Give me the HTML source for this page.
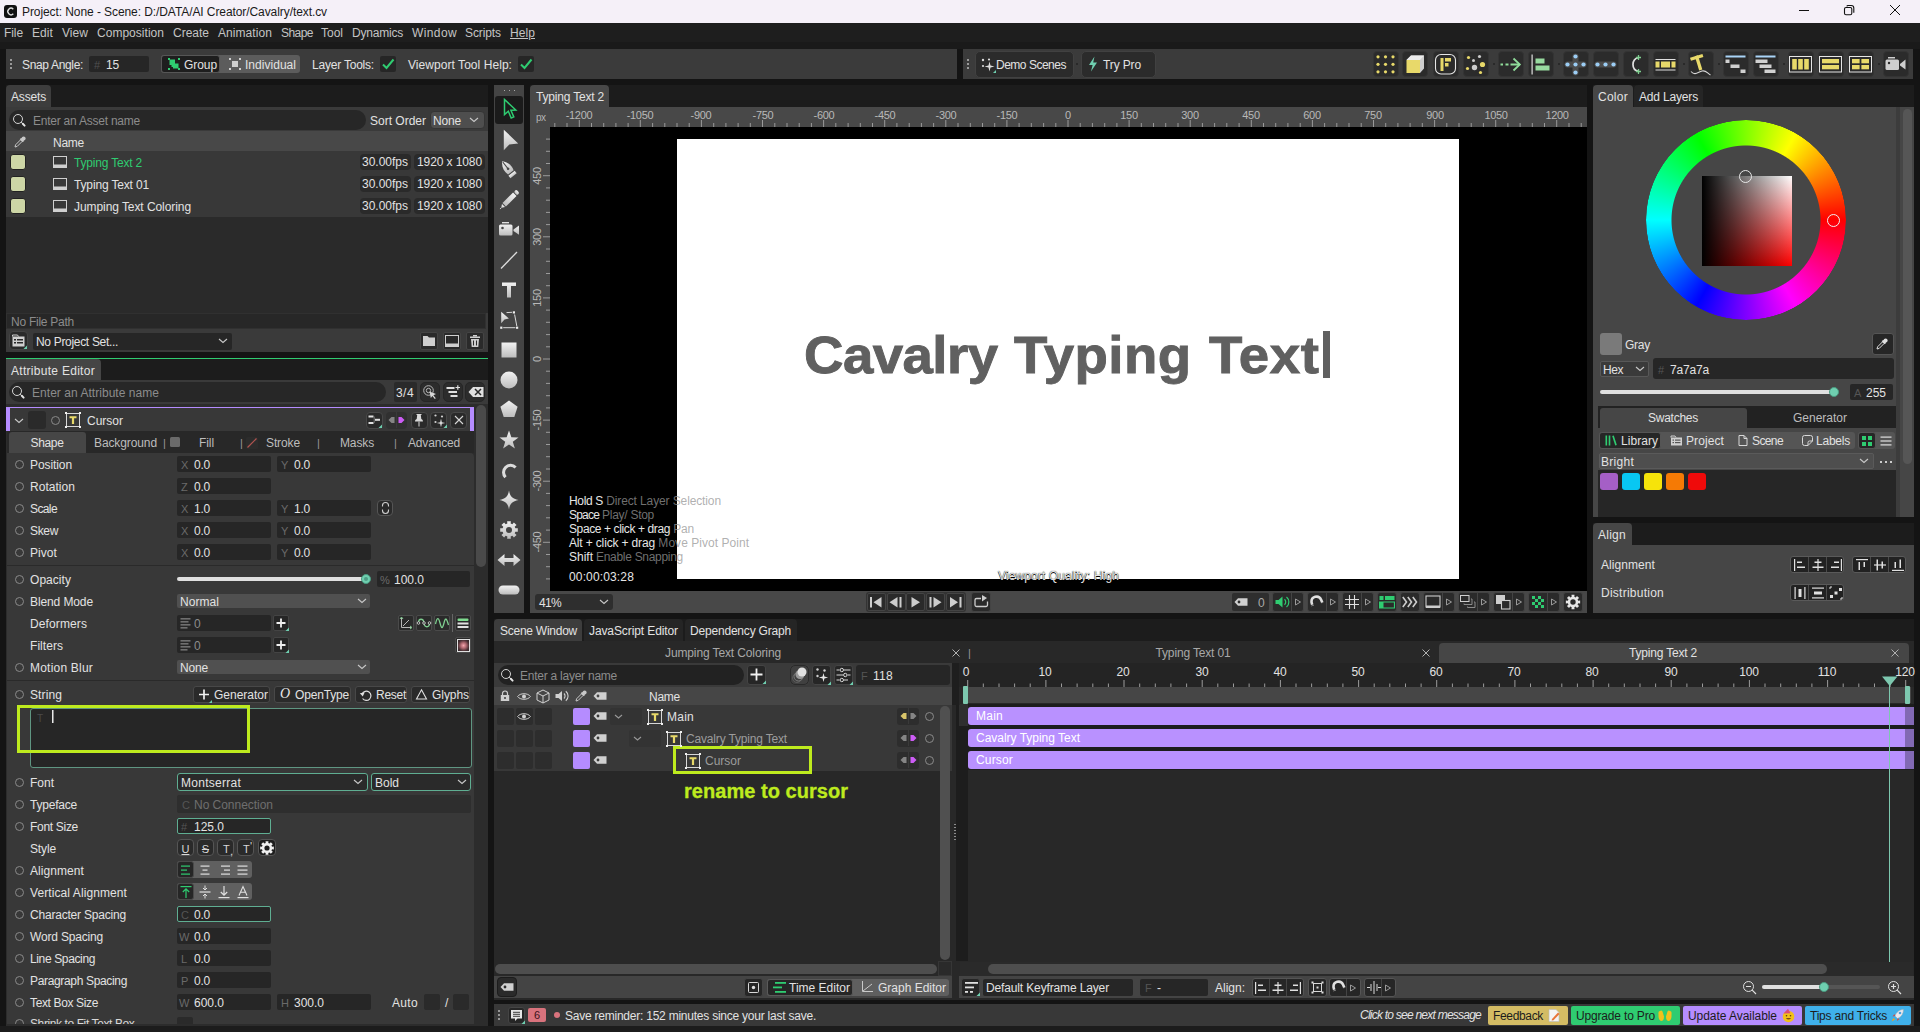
<!DOCTYPE html><html><head><meta charset="utf-8"><title>Cavalry</title><style>

html,body{margin:0;padding:0;}
body{width:1920px;height:1032px;overflow:hidden;background:#141414;position:relative;font-family:"Liberation Sans",sans-serif;}
div,span,svg{position:absolute;display:block;}
span{white-space:pre;}

</style></head><body>
<div style="left:0px;top:0px;width:1920px;height:23px;background:#f5f0f8;"></div>
<div style="left:4px;top:5px;width:13px;height:13px;background:#111;border-radius:3px;"></div>
<svg style="left:4px;top:5px" width="13" height="13" viewBox="0 0 13 13"><path d="M9.3 4.2 A3.2 3.2 0 1 0 9.3 8.8" fill="none" stroke="#ddd" stroke-width="1.4"/></svg>
<span style="top:2.5px;font-size:12px;line-height:18px;color:#1a1a1a;letter-spacing:-0.082px;left:22px;">Project: None - Scene: D:/DATA/AI Creator/Cavalry/text.cv</span>
<svg style="left:1794px;top:2px" width="120" height="18" viewBox="0 0 120 18"><path d="M5 8.5h10" stroke="#111" stroke-width="1" fill="none"/><rect x="50.500" y="5.500" width="7.300" height="7.200" rx="1.500" fill="none" stroke="#111" stroke-width="1.100"/><path d="M52.800 4.300Q53 3.500 54 3.500h3.300a2.500 2.500 0 0 1 2.500 2.500v4.700" fill="none" stroke="#111" stroke-width="1.100"/><path d="M96 3l10 10M106 3l-10 10" stroke="#111" stroke-width="1" fill="none"/></svg>
<div style="left:0px;top:23px;width:1920px;height:19px;background:#1e1e1e;"></div>
<div style="left:0px;top:42px;width:1920px;height:7px;background:#1a1a1a;"></div>
<span style="top:24.2px;font-size:12px;line-height:18px;color:#c4c4c4;letter-spacing:-0.086px;left:4px;">File</span>
<span style="top:24.2px;font-size:12px;line-height:18px;color:#c4c4c4;letter-spacing:0.078px;left:32px;">Edit</span>
<span style="top:24.2px;font-size:12px;line-height:18px;color:#c4c4c4;letter-spacing:0.051px;left:62px;">View</span>
<span style="top:24.2px;font-size:12px;line-height:18px;color:#c4c4c4;letter-spacing:0.027px;left:97px;">Composition</span>
<span style="top:24.2px;font-size:12px;line-height:18px;color:#c4c4c4;letter-spacing:-0.005px;left:173px;">Create</span>
<span style="top:24.2px;font-size:12px;line-height:18px;color:#c4c4c4;letter-spacing:0.069px;left:218px;">Animation</span>
<span style="top:24.2px;font-size:12px;line-height:18px;color:#c4c4c4;letter-spacing:-0.541px;left:281px;">Shape</span>
<span style="top:24.2px;font-size:12px;line-height:18px;color:#c4c4c4;left:321px;">Tool</span>
<span style="top:24.2px;font-size:12px;line-height:18px;color:#c4c4c4;letter-spacing:-0.211px;left:352px;">Dynamics</span>
<span style="top:24.2px;font-size:12px;line-height:18px;color:#c4c4c4;letter-spacing:0.385px;left:412px;">Window</span>
<span style="top:24.2px;font-size:12px;line-height:18px;color:#c4c4c4;letter-spacing:-0.098px;left:465px;">Scripts</span>
<span style="top:24.2px;font-size:12px;line-height:18px;color:#c4c4c4;letter-spacing:0.078px;left:510px;text-decoration:underline;">Help</span>
<div style="left:6px;top:49px;width:951px;height:30px;background:#3b3b3b;"></div>
<div style="left:10px;top:59px;width:2px;height:2px;background:#9a9a9a;"></div>
<div style="left:10px;top:63px;width:2px;height:2px;background:#9a9a9a;"></div>
<div style="left:10px;top:67px;width:2px;height:2px;background:#9a9a9a;"></div>
<span style="top:56.0px;font-size:12px;line-height:18px;color:#e2e2e2;letter-spacing:-0.339px;left:22px;">Snap Angle:</span>
<div style="left:89px;top:56px;width:60px;height:16px;background:#262626;border-radius:2px;"></div>
<span style="top:57.0px;font-size:11px;line-height:16px;color:#505050;left:94px;">#</span>
<span style="top:56.0px;font-size:12px;line-height:18px;color:#e2e2e2;letter-spacing:-0.180px;left:106px;">15</span>
<div style="left:161px;top:55px;width:139px;height:18px;background:#5c5c5c;border-radius:3px;"></div>
<div style="left:161px;top:55px;width:59px;height:18px;background:#1e1e1e;border-radius:3px;border:1px solid #565656;box-sizing:border-box;"></div>
<span style="top:56.0px;font-size:12px;line-height:18px;color:#e2e2e2;letter-spacing:-0.072px;left:184px;">Group</span>
<span style="top:56.0px;font-size:12px;line-height:18px;color:#e2e2e2;letter-spacing:0.030px;left:245px;">Individual</span>
<span style="top:56.0px;font-size:12px;line-height:18px;color:#e2e2e2;letter-spacing:-0.207px;left:312px;">Layer Tools:</span>
<div style="left:380px;top:56px;width:16px;height:16px;background:#262626;border-radius:2px;"></div>
<span style="top:56.0px;font-size:12px;line-height:18px;color:#e2e2e2;letter-spacing:0.055px;left:408px;">Viewport Tool Help:</span>
<div style="left:518px;top:56px;width:16px;height:16px;background:#262626;border-radius:2px;"></div>
<div style="left:963px;top:49px;width:950px;height:30px;background:#3b3b3b;"></div>
<div style="left:967px;top:59px;width:2px;height:2px;background:#9a9a9a;"></div>
<div style="left:967px;top:63px;width:2px;height:2px;background:#9a9a9a;"></div>
<div style="left:967px;top:67px;width:2px;height:2px;background:#9a9a9a;"></div>
<div style="left:974.5px;top:50.6px;width:99px;height:27px;background:#2b2b2b;border-radius:5px;border:1px solid #414141;box-sizing:border-box;"></div>
<span style="top:56.0px;font-size:12px;line-height:18px;color:#e2e2e2;letter-spacing:-0.489px;left:996px;">Demo Scenes</span>
<div style="left:1081px;top:50.6px;width:74.5px;height:27px;background:#2b2b2b;border-radius:5px;border:1px solid #414141;box-sizing:border-box;"></div>
<span style="top:56.0px;font-size:12px;line-height:18px;color:#e2e2e2;letter-spacing:-0.127px;left:1103px;">Try Pro</span>
<div style="left:1372.6px;top:50.7px;width:26.8px;height:26.8px;background:#2b2b2b;border-radius:4px;border:1px solid #343434;box-sizing:border-box;"></div>
<div style="left:1401.6px;top:50.7px;width:26.8px;height:26.8px;background:#2b2b2b;border-radius:4px;border:1px solid #343434;box-sizing:border-box;"></div>
<div style="left:1432.6px;top:50.7px;width:26.8px;height:26.8px;background:#2b2b2b;border-radius:4px;border:1px solid #343434;box-sizing:border-box;"></div>
<div style="left:1462.6px;top:50.7px;width:26.8px;height:26.8px;background:#2b2b2b;border-radius:4px;border:1px solid #343434;box-sizing:border-box;"></div>
<div style="left:1497.6px;top:50.7px;width:26.8px;height:26.8px;background:#2b2b2b;border-radius:4px;border:1px solid #343434;box-sizing:border-box;"></div>
<div style="left:1527.6px;top:50.7px;width:26.8px;height:26.8px;background:#2b2b2b;border-radius:4px;border:1px solid #343434;box-sizing:border-box;"></div>
<div style="left:1562.6px;top:50.7px;width:26.8px;height:26.8px;background:#2b2b2b;border-radius:4px;border:1px solid #343434;box-sizing:border-box;"></div>
<div style="left:1592.6px;top:50.7px;width:26.8px;height:26.8px;background:#2b2b2b;border-radius:4px;border:1px solid #343434;box-sizing:border-box;"></div>
<div style="left:1622.6px;top:50.7px;width:26.8px;height:26.8px;background:#2b2b2b;border-radius:4px;border:1px solid #343434;box-sizing:border-box;"></div>
<div style="left:1652.6px;top:50.7px;width:26.8px;height:26.8px;background:#2b2b2b;border-radius:4px;border:1px solid #343434;box-sizing:border-box;"></div>
<div style="left:1687.6px;top:50.7px;width:26.8px;height:26.8px;background:#2b2b2b;border-radius:4px;border:1px solid #343434;box-sizing:border-box;"></div>
<div style="left:1722.6px;top:50.7px;width:26.8px;height:26.8px;background:#2b2b2b;border-radius:4px;border:1px solid #343434;box-sizing:border-box;"></div>
<div style="left:1752.6px;top:50.7px;width:26.8px;height:26.8px;background:#2b2b2b;border-radius:4px;border:1px solid #343434;box-sizing:border-box;"></div>
<div style="left:1787.6px;top:50.7px;width:26.8px;height:26.8px;background:#2b2b2b;border-radius:4px;border:1px solid #343434;box-sizing:border-box;"></div>
<div style="left:1817.6px;top:50.7px;width:26.8px;height:26.8px;background:#2b2b2b;border-radius:4px;border:1px solid #343434;box-sizing:border-box;"></div>
<div style="left:1847.6px;top:50.7px;width:26.8px;height:26.8px;background:#2b2b2b;border-radius:4px;border:1px solid #343434;box-sizing:border-box;"></div>
<div style="left:1882.6px;top:50.7px;width:26.8px;height:26.8px;background:#2b2b2b;border-radius:4px;border:1px solid #343434;box-sizing:border-box;"></div>
<div style="left:6px;top:85px;width:482px;height:22px;background:#1c1c1c;"></div>
<div style="left:6px;top:85px;width:45px;height:22px;background:#3d3d3d;border-radius:4px 4px 0 0;"></div>
<span style="top:88.0px;font-size:12px;line-height:18px;color:#e2e2e2;letter-spacing:-0.169px;left:11px;">Assets</span>
<div style="left:6px;top:107px;width:482px;height:245px;background:#3a3a3a;"></div>
<div style="left:6px;top:151px;width:482px;height:162px;background:#2a2a2a;"></div>
<div style="left:9px;top:110px;width:357px;height:20px;background:#272727;border-radius:10px;"></div>
<span style="top:112.0px;font-size:12px;line-height:18px;color:#8c8c8c;letter-spacing:-0.232px;left:33px;">Enter an Asset name</span>
<span style="top:112.0px;font-size:12px;line-height:18px;color:#e2e2e2;left:370px;">Sort Order</span>
<div style="left:430px;top:111px;width:55px;height:18px;background:#4e4e4e;border-radius:4px;border:1px solid #343434;box-sizing:border-box;"></div>
<span style="top:112.0px;font-size:12px;line-height:18px;color:#e2e2e2;letter-spacing:-0.172px;left:433px;">None</span>
<div style="left:6px;top:131px;width:482px;height:20px;background:#484848;"></div>
<span style="top:134.0px;font-size:12px;line-height:18px;color:#e2e2e2;letter-spacing:-0.254px;left:53px;">Name</span>
<div style="left:6px;top:151px;width:482px;height:22px;background:#383838;"></div>
<div style="left:10px;top:154px;width:16px;height:16px;background:#cdd6a6;border-radius:3px;border:1px solid #222;box-sizing:border-box;"></div>
<span style="top:154.0px;font-size:12px;line-height:18px;color:#2fcc71;letter-spacing:-0.192px;left:74px;">Typing Text 2</span>
<div style="left:360px;top:154px;width:51px;height:16px;background:#2a2a2a;border-radius:4px;"></div>
<span style="top:153.0px;font-size:12px;line-height:18px;color:#e2e2e2;letter-spacing:-0.006px;left:362px;">30.00fps</span>
<div style="left:414px;top:154px;width:71px;height:16px;background:#2a2a2a;border-radius:4px;"></div>
<span style="top:153.0px;font-size:12px;line-height:18px;color:#e2e2e2;letter-spacing:-0.097px;left:417px;">1920 x 1080</span>
<div style="left:6px;top:173px;width:482px;height:22px;background:#383838;"></div>
<div style="left:10px;top:176px;width:16px;height:16px;background:#cdd6a6;border-radius:3px;border:1px solid #222;box-sizing:border-box;"></div>
<span style="top:176.0px;font-size:12px;line-height:18px;color:#e2e2e2;letter-spacing:-0.155px;left:74px;">Typing Text 01</span>
<div style="left:360px;top:176px;width:51px;height:16px;background:#2a2a2a;border-radius:4px;"></div>
<span style="top:175.0px;font-size:12px;line-height:18px;color:#e2e2e2;letter-spacing:-0.006px;left:362px;">30.00fps</span>
<div style="left:414px;top:176px;width:71px;height:16px;background:#2a2a2a;border-radius:4px;"></div>
<span style="top:175.0px;font-size:12px;line-height:18px;color:#e2e2e2;letter-spacing:-0.097px;left:417px;">1920 x 1080</span>
<div style="left:6px;top:195px;width:482px;height:22px;background:#383838;"></div>
<div style="left:10px;top:198px;width:16px;height:16px;background:#cdd6a6;border-radius:3px;border:1px solid #222;box-sizing:border-box;"></div>
<span style="top:198.0px;font-size:12px;line-height:18px;color:#e2e2e2;letter-spacing:-0.072px;left:74px;">Jumping Text Coloring</span>
<div style="left:360px;top:198px;width:51px;height:16px;background:#2a2a2a;border-radius:4px;"></div>
<span style="top:197.0px;font-size:12px;line-height:18px;color:#e2e2e2;letter-spacing:-0.006px;left:362px;">30.00fps</span>
<div style="left:414px;top:198px;width:71px;height:16px;background:#2a2a2a;border-radius:4px;"></div>
<span style="top:197.0px;font-size:12px;line-height:18px;color:#e2e2e2;letter-spacing:-0.097px;left:417px;">1920 x 1080</span>
<div style="left:6px;top:313px;width:480px;height:16px;background:#272727;border:1px solid #303030;box-sizing:border-box;"></div>
<span style="top:312.5px;font-size:12px;line-height:18px;color:#8c8c8c;letter-spacing:-0.253px;left:11px;">No File Path</span>
<div style="left:9px;top:331px;width:19px;height:19px;background:#2a2a2a;border-radius:4px;border:1px solid #444;box-sizing:border-box;"></div>
<div style="left:33px;top:333px;width:199px;height:17px;background:#262626;border-radius:2px;"></div>
<span style="top:332.8px;font-size:12px;line-height:18px;color:#e2e2e2;letter-spacing:-0.316px;left:36px;">No Project Set...</span>
<div style="left:420px;top:332px;width:18px;height:18px;background:#2a2a2a;border-radius:2px;border:1px solid #444;box-sizing:border-box;"></div>
<div style="left:443px;top:332px;width:18px;height:18px;background:#2a2a2a;border-radius:2px;border:1px solid #444;box-sizing:border-box;"></div>
<div style="left:466px;top:332px;width:18px;height:18px;background:#2a2a2a;border-radius:2px;border:1px solid #444;box-sizing:border-box;"></div>
<div style="left:6px;top:358px;width:482px;height:1px;background:#2fcc71;"></div>
<div style="left:6px;top:359px;width:482px;height:21px;background:#1c1c1c;"></div>
<div style="left:6px;top:359px;width:95px;height:21px;background:#454545;border-radius:0 4px 0 0;"></div>
<span style="top:361.5px;font-size:12px;line-height:18px;color:#e2e2e2;letter-spacing:0.289px;left:11px;">Attribute Editor</span>
<div style="left:0px;top:1026px;width:1920px;height:6px;background:#1c1c1c;"></div>
<div style="left:6px;top:380px;width:482px;height:646px;background:#3a3a3a;"></div>
<div style="left:9px;top:382px;width:377px;height:20px;background:#272727;border-radius:10px;"></div>
<span style="top:384.0px;font-size:12px;line-height:18px;color:#8c8c8c;letter-spacing:0.040px;left:32px;">Enter an Attribute name</span>
<div style="left:394px;top:382px;width:23px;height:20px;background:#2a2a2a;border-radius:2px;"></div>
<span style="top:384.0px;font-size:12px;line-height:18px;color:#e2e2e2;letter-spacing:0.438px;left:396px;">3/4</span>
<div style="left:420px;top:382px;width:20px;height:20px;background:#2c2c2c;border-radius:5px;border:1px solid #262626;box-sizing:border-box;"></div>
<div style="left:443px;top:382px;width:20px;height:20px;background:#2c2c2c;border-radius:5px;border:1px solid #262626;box-sizing:border-box;"></div>
<div style="left:465px;top:382px;width:20px;height:20px;background:#2c2c2c;border-radius:5px;border:1px solid #262626;box-sizing:border-box;"></div>
<div style="left:6px;top:404px;width:482px;height:622px;background:#2c2c2c;"></div>
<div style="left:7px;top:408px;width:467px;height:23px;background:#383838;"></div>
<div style="left:7px;top:407px;width:467px;height:1px;background:#b58cff;"></div>
<div style="left:6px;top:407px;width:4px;height:24px;background:#b58cff;"></div>
<div style="left:470px;top:407px;width:4px;height:24px;background:#b58cff;"></div>
<div style="left:28px;top:411px;width:18px;height:18px;background:#2a2a2a;border-radius:3px;"></div>
<span style="top:412.0px;font-size:12px;line-height:18px;color:#e2e2e2;left:87px;">Cursor</span>
<div style="left:366px;top:412px;width:17px;height:17px;background:#2a2a2a;border-radius:4px;border:1px solid #484848;box-sizing:border-box;"></div>
<div style="left:411px;top:412px;width:17px;height:17px;background:#2a2a2a;border-radius:4px;border:1px solid #484848;box-sizing:border-box;"></div>
<div style="left:430px;top:412px;width:17px;height:17px;background:#2a2a2a;border-radius:4px;border:1px solid #484848;box-sizing:border-box;"></div>
<div style="left:450px;top:412px;width:17px;height:17px;background:#2a2a2a;border-radius:4px;border:1px solid #484848;box-sizing:border-box;"></div>
<div style="left:386px;top:412px;width:21px;height:17px;background:#303030;border-radius:4px;"></div>
<div style="left:7px;top:431px;width:467px;height:22px;background:#282828;"></div>
<div style="left:9px;top:432px;width:77px;height:21px;background:#464646;border-radius:3px 3px 0 0;"></div>
<span style="top:433.5px;font-size:12px;line-height:18px;color:#e2e2e2;letter-spacing:-0.341px;left:30.5px;">Shape</span>
<span style="top:433.5px;font-size:12px;line-height:18px;color:#bdbdbd;letter-spacing:-0.105px;left:94px;">Background</span>
<span style="top:435.0px;font-size:11px;line-height:16px;color:#999;left:163px;">|</span>
<div style="left:170px;top:437px;width:10px;height:10px;background:#6a6a6a;border-radius:1.5px;"></div>
<span style="top:433.5px;font-size:12px;line-height:18px;color:#bdbdbd;letter-spacing:-0.082px;left:199px;">Fill</span>
<span style="top:435.0px;font-size:11px;line-height:16px;color:#999;left:240px;">|</span>
<span style="top:433.5px;font-size:12px;line-height:18px;color:#bdbdbd;letter-spacing:-0.115px;left:266px;">Stroke</span>
<span style="top:435.0px;font-size:11px;line-height:16px;color:#999;left:317px;">|</span>
<span style="top:433.5px;font-size:12px;line-height:18px;color:#bdbdbd;letter-spacing:-0.134px;left:340px;">Masks</span>
<span style="top:435.0px;font-size:11px;line-height:16px;color:#999;left:394px;">|</span>
<span style="top:433.5px;font-size:12px;line-height:18px;color:#bdbdbd;letter-spacing:-0.172px;left:408px;">Advanced</span>
<div style="left:7px;top:453px;width:467px;height:571px;background:#383838;border-radius:0 4px 0 0;"></div>
<div style="left:476px;top:405px;width:10px;height:162px;background:#4a4a4a;border-radius:5px;"></div>
<div style="left:15px;top:460px;width:9px;height:9px;border-radius:5px;border:1px solid #8a8a8a;box-sizing:border-box;"></div>
<span style="top:456.0px;font-size:12px;line-height:18px;color:#e2e2e2;letter-spacing:-0.088px;left:30px;">Position</span>
<div style="left:177px;top:456px;width:94px;height:16px;background:#262626;border-radius:2px;"></div>
<span style="top:457.0px;font-size:11px;line-height:16px;color:#6a6a6a;left:181px;">X</span>
<span style="top:456.0px;font-size:12px;line-height:18px;color:#e2e2e2;letter-spacing:-0.229px;left:194px;">0.0</span>
<div style="left:277px;top:456px;width:94px;height:16px;background:#262626;border-radius:2px;"></div>
<span style="top:457.0px;font-size:11px;line-height:16px;color:#6a6a6a;left:281px;">Y</span>
<span style="top:456.0px;font-size:12px;line-height:18px;color:#e2e2e2;letter-spacing:-0.229px;left:294px;">0.0</span>
<div style="left:15px;top:482px;width:9px;height:9px;border-radius:5px;border:1px solid #8a8a8a;box-sizing:border-box;"></div>
<span style="top:478.0px;font-size:12px;line-height:18px;color:#e2e2e2;letter-spacing:0.037px;left:30px;">Rotation</span>
<div style="left:177px;top:478px;width:94px;height:16px;background:#262626;border-radius:2px;"></div>
<span style="top:479.0px;font-size:11px;line-height:16px;color:#6a6a6a;left:181px;">Z</span>
<span style="top:478.0px;font-size:12px;line-height:18px;color:#e2e2e2;letter-spacing:-0.229px;left:194px;">0.0</span>
<div style="left:15px;top:504px;width:9px;height:9px;border-radius:5px;border:1px solid #8a8a8a;box-sizing:border-box;"></div>
<span style="top:500.0px;font-size:12px;line-height:18px;color:#e2e2e2;letter-spacing:-0.606px;left:30px;">Scale</span>
<div style="left:177px;top:500px;width:94px;height:16px;background:#262626;border-radius:2px;"></div>
<span style="top:501.0px;font-size:11px;line-height:16px;color:#6a6a6a;left:181px;">X</span>
<span style="top:500.0px;font-size:12px;line-height:18px;color:#e2e2e2;letter-spacing:-0.229px;left:194px;">1.0</span>
<div style="left:277px;top:500px;width:94px;height:16px;background:#262626;border-radius:2px;"></div>
<span style="top:501.0px;font-size:11px;line-height:16px;color:#6a6a6a;left:281px;">Y</span>
<span style="top:500.0px;font-size:12px;line-height:18px;color:#e2e2e2;letter-spacing:-0.229px;left:294px;">1.0</span>
<div style="left:15px;top:526px;width:9px;height:9px;border-radius:5px;border:1px solid #8a8a8a;box-sizing:border-box;"></div>
<span style="top:522.0px;font-size:12px;line-height:18px;color:#e2e2e2;letter-spacing:-0.336px;left:30px;">Skew</span>
<div style="left:177px;top:522px;width:94px;height:16px;background:#262626;border-radius:2px;"></div>
<span style="top:523.0px;font-size:11px;line-height:16px;color:#6a6a6a;left:181px;">X</span>
<span style="top:522.0px;font-size:12px;line-height:18px;color:#e2e2e2;letter-spacing:-0.229px;left:194px;">0.0</span>
<div style="left:277px;top:522px;width:94px;height:16px;background:#262626;border-radius:2px;"></div>
<span style="top:523.0px;font-size:11px;line-height:16px;color:#6a6a6a;left:281px;">Y</span>
<span style="top:522.0px;font-size:12px;line-height:18px;color:#e2e2e2;letter-spacing:-0.229px;left:294px;">0.0</span>
<div style="left:15px;top:548px;width:9px;height:9px;border-radius:5px;border:1px solid #8a8a8a;box-sizing:border-box;"></div>
<span style="top:544.0px;font-size:12px;line-height:18px;color:#e2e2e2;letter-spacing:0.062px;left:30px;">Pivot</span>
<div style="left:177px;top:544px;width:94px;height:16px;background:#262626;border-radius:2px;"></div>
<span style="top:545.0px;font-size:11px;line-height:16px;color:#6a6a6a;left:181px;">X</span>
<span style="top:544.0px;font-size:12px;line-height:18px;color:#e2e2e2;letter-spacing:-0.229px;left:194px;">0.0</span>
<div style="left:277px;top:544px;width:94px;height:16px;background:#262626;border-radius:2px;"></div>
<span style="top:545.0px;font-size:11px;line-height:16px;color:#6a6a6a;left:281px;">Y</span>
<span style="top:544.0px;font-size:12px;line-height:18px;color:#e2e2e2;letter-spacing:-0.229px;left:294px;">0.0</span>
<div style="left:377px;top:500px;width:16px;height:16px;background:#2a2a2a;border-radius:4px;border:1px solid #555;box-sizing:border-box;"></div>
<div style="left:7px;top:565px;width:467px;height:1px;background:#2a2a2a;"></div>
<div style="left:15px;top:575px;width:9px;height:9px;border-radius:5px;border:1px solid #8a8a8a;box-sizing:border-box;"></div>
<span style="top:571.0px;font-size:12px;line-height:18px;color:#e2e2e2;letter-spacing:0.045px;left:30px;">Opacity</span>
<div style="left:177px;top:577px;width:189px;height:4px;background:#e0e0e0;border-radius:2px;"></div>
<div style="left:361px;top:574px;width:10px;height:10px;background:#6fcfb0;border-radius:5px;border:1px solid #4a9a80;box-sizing:border-box;"></div>
<div style="left:377px;top:571px;width:93px;height:16px;background:#262626;border-radius:2px;"></div>
<span style="top:572.0px;font-size:11px;line-height:16px;color:#6a6a6a;left:380px;">%</span>
<span style="top:571.0px;font-size:12px;line-height:18px;color:#e2e2e2;letter-spacing:-0.006px;left:394px;">100.0</span>
<div style="left:15px;top:597px;width:9px;height:9px;border-radius:5px;border:1px solid #8a8a8a;box-sizing:border-box;"></div>
<span style="top:593.0px;font-size:12px;line-height:18px;color:#e2e2e2;letter-spacing:-0.105px;left:30px;">Blend Mode</span>
<div style="left:177px;top:594px;width:193px;height:14px;background:#505050;border-radius:2px;"></div>
<span style="top:593.0px;font-size:12px;line-height:18px;color:#e2e2e2;letter-spacing:0.055px;left:180px;">Normal</span>
<span style="top:615.0px;font-size:12px;line-height:18px;color:#e2e2e2;letter-spacing:0.109px;left:30px;">Deformers</span>
<div style="left:177px;top:615px;width:94px;height:16px;background:#262626;border-radius:2px;"></div>
<span style="top:615.0px;font-size:12px;line-height:18px;color:#8c8c8c;left:194px;">0</span>
<div style="left:273px;top:615px;width:16px;height:16px;background:#262626;border-radius:2px;border:1px solid #444;box-sizing:border-box;"></div>
<span style="top:637.0px;font-size:12px;line-height:18px;color:#e2e2e2;letter-spacing:0.047px;left:30px;">Filters</span>
<div style="left:177px;top:637px;width:94px;height:16px;background:#262626;border-radius:2px;"></div>
<span style="top:637.0px;font-size:12px;line-height:18px;color:#8c8c8c;left:194px;">0</span>
<div style="left:273px;top:637px;width:16px;height:16px;background:#262626;border-radius:2px;border:1px solid #444;box-sizing:border-box;"></div>
<div style="left:398px;top:615px;width:16px;height:16px;background:#2a2a2a;border-radius:2px;border:1px solid #4a4a4a;box-sizing:border-box;"></div>
<div style="left:416px;top:615px;width:16px;height:16px;background:#2a2a2a;border-radius:2px;border:1px solid #4a4a4a;box-sizing:border-box;"></div>
<div style="left:434px;top:615px;width:16px;height:16px;background:#2a2a2a;border-radius:2px;border:1px solid #4a4a4a;box-sizing:border-box;"></div>
<div style="left:455px;top:615px;width:16px;height:16px;background:#2a2a2a;border-radius:2px;border:1px solid #4a4a4a;box-sizing:border-box;"></div>
<div style="left:452px;top:614px;width:1px;height:18px;background:#666;"></div>
<div style="left:455px;top:637px;width:16px;height:16px;background:#2a2a2a;border-radius:2px;border:1px solid #4a4a4a;box-sizing:border-box;"></div>
<div style="left:15px;top:663px;width:9px;height:9px;border-radius:5px;border:1px solid #8a8a8a;box-sizing:border-box;"></div>
<span style="top:659.0px;font-size:12px;line-height:18px;color:#e2e2e2;letter-spacing:0.209px;left:30px;">Motion Blur</span>
<div style="left:177px;top:660px;width:193px;height:14px;background:#505050;border-radius:2px;"></div>
<span style="top:659.0px;font-size:12px;line-height:18px;color:#e2e2e2;letter-spacing:-0.172px;left:180px;">None</span>
<div style="left:7px;top:680px;width:467px;height:1px;background:#2a2a2a;"></div>
<div style="left:15px;top:690px;width:9px;height:9px;border-radius:5px;border:1px solid #8a8a8a;box-sizing:border-box;"></div>
<span style="top:686.0px;font-size:12px;line-height:18px;color:#e2e2e2;letter-spacing:0.107px;left:30px;">String</span>
<div style="left:193px;top:686px;width:77px;height:17px;background:#2a2a2a;border-radius:3px;border:1px solid #484848;box-sizing:border-box;"></div>
<span style="top:685.5px;font-size:12px;line-height:18px;color:#e2e2e2;left:214px;">Generator</span>
<div style="left:274px;top:686px;width:77px;height:17px;background:#2a2a2a;border-radius:3px;border:1px solid #484848;box-sizing:border-box;"></div>
<span style="top:685.5px;font-size:12px;line-height:18px;color:#e2e2e2;letter-spacing:-0.172px;left:295px;">OpenType</span>
<div style="left:355px;top:686px;width:52px;height:17px;background:#2a2a2a;border-radius:3px;border:1px solid #484848;box-sizing:border-box;"></div>
<span style="top:685.5px;font-size:12px;line-height:18px;color:#e2e2e2;letter-spacing:-0.272px;left:376px;">Reset</span>
<div style="left:411px;top:686px;width:59px;height:17px;background:#2a2a2a;border-radius:3px;border:1px solid #484848;box-sizing:border-box;"></div>
<span style="top:685.5px;font-size:12px;line-height:18px;color:#e2e2e2;letter-spacing:-0.060px;left:432px;">Glyphs</span>
<div style="left:30px;top:708px;width:442px;height:60px;background:#262626;border-radius:3px;border:1px solid #5f9682;box-sizing:border-box;"></div>
<span style="top:710.5px;font-size:10px;line-height:15px;color:#4a4a4a;left:37px;">T</span>
<div style="left:52px;top:710px;width:1px;height:13px;background:#e8e8e8;"></div>
<div style="left:53px;top:710px;width:1px;height:13px;background:#8a8a8a;"></div>
<div style="left:17px;top:705px;width:233px;height:48px;border:3px solid #beeb1e;box-sizing:border-box;"></div>
<div style="left:15px;top:778px;width:9px;height:9px;border-radius:5px;border:1px solid #8a8a8a;box-sizing:border-box;"></div>
<span style="top:774.0px;font-size:12px;line-height:18px;color:#e2e2e2;left:30px;">Font</span>
<div style="left:177px;top:773px;width:191px;height:18px;background:#2a2a2a;border-radius:3px;border:1px solid #5fae92;box-sizing:border-box;"></div>
<span style="top:774.0px;font-size:12px;line-height:18px;color:#e2e2e2;letter-spacing:0.264px;left:181px;">Montserrat</span>
<div style="left:371px;top:773px;width:100px;height:18px;background:#2a2a2a;border-radius:3px;border:1px solid #5fae92;box-sizing:border-box;"></div>
<span style="top:774.0px;font-size:12px;line-height:18px;color:#e2e2e2;letter-spacing:-0.008px;left:375px;">Bold</span>
<div style="left:15px;top:800px;width:9px;height:9px;border-radius:5px;border:1px solid #8a8a8a;box-sizing:border-box;"></div>
<span style="top:796.0px;font-size:12px;line-height:18px;color:#e2e2e2;letter-spacing:-0.213px;left:30px;">Typeface</span>
<div style="left:177px;top:795px;width:294px;height:18px;background:#2e2e2e;border-radius:2px;"></div>
<span style="top:797.0px;font-size:11px;line-height:16px;color:#555;left:182px;">C</span>
<span style="top:796.0px;font-size:12px;line-height:18px;color:#6e6e6e;letter-spacing:-0.030px;left:194px;">No Connection</span>
<div style="left:15px;top:822px;width:9px;height:9px;border-radius:5px;border:1px solid #8a8a8a;box-sizing:border-box;"></div>
<span style="top:818.0px;font-size:12px;line-height:18px;color:#e2e2e2;letter-spacing:-0.300px;left:30px;">Font Size</span>
<div style="left:177px;top:818px;width:94px;height:16px;background:#262626;border-radius:2px;border:1px solid #5fae92;box-sizing:border-box;"></div>
<span style="top:819.0px;font-size:11px;line-height:16px;color:#555;left:181px;">#</span>
<span style="top:818.0px;font-size:12px;line-height:18px;color:#e2e2e2;letter-spacing:-0.006px;left:194px;">125.0</span>
<span style="top:840.0px;font-size:12px;line-height:18px;color:#e2e2e2;letter-spacing:-0.138px;left:30px;">Style</span>
<div style="left:177px;top:839px;width:17px;height:17px;background:#2a2a2a;border-radius:4px;border:1px solid #555;box-sizing:border-box;"></div>
<div style="left:197px;top:839px;width:17px;height:17px;background:#2a2a2a;border-radius:4px;border:1px solid #555;box-sizing:border-box;"></div>
<div style="left:217px;top:839px;width:17px;height:17px;background:#2a2a2a;border-radius:4px;border:1px solid #555;box-sizing:border-box;"></div>
<div style="left:237px;top:839px;width:17px;height:17px;background:#2a2a2a;border-radius:4px;border:1px solid #555;box-sizing:border-box;"></div>
<div style="left:258px;top:839px;width:18px;height:17px;background:#1e1e1e;border-radius:4px;border:1px solid #555;box-sizing:border-box;"></div>
<div style="left:15px;top:866px;width:9px;height:9px;border-radius:5px;border:1px solid #8a8a8a;box-sizing:border-box;"></div>
<span style="top:862.0px;font-size:12px;line-height:18px;color:#e2e2e2;letter-spacing:0.069px;left:30px;">Alignment</span>
<div style="left:177px;top:861px;width:75px;height:17px;background:#606060;border-radius:3px;"></div>
<div style="left:177px;top:861px;width:17px;height:17px;background:#262626;border-radius:3px;border:1px solid #4a4a4a;box-sizing:border-box;"></div>
<div style="left:15px;top:888px;width:9px;height:9px;border-radius:5px;border:1px solid #8a8a8a;box-sizing:border-box;"></div>
<span style="top:884.0px;font-size:12px;line-height:18px;color:#e2e2e2;letter-spacing:0.089px;left:30px;">Vertical Alignment</span>
<div style="left:177px;top:883px;width:75px;height:17px;background:#606060;border-radius:3px;"></div>
<div style="left:177px;top:883px;width:17px;height:17px;background:#262626;border-radius:3px;border:1px solid #4a4a4a;box-sizing:border-box;"></div>
<div style="left:15px;top:910px;width:9px;height:9px;border-radius:5px;border:1px solid #8a8a8a;box-sizing:border-box;"></div>
<span style="top:906.0px;font-size:12px;line-height:18px;color:#e2e2e2;letter-spacing:-0.199px;left:30px;">Character Spacing</span>
<div style="left:177px;top:906px;width:94px;height:16px;background:#262626;border-radius:2px;border:1px solid #5fae92;box-sizing:border-box;"></div>
<span style="top:907.0px;font-size:11px;line-height:16px;color:#555;left:181px;">C</span>
<span style="top:906.0px;font-size:12px;line-height:18px;color:#e2e2e2;letter-spacing:-0.229px;left:194px;">0.0</span>
<div style="left:15px;top:932px;width:9px;height:9px;border-radius:5px;border:1px solid #8a8a8a;box-sizing:border-box;"></div>
<span style="top:928.0px;font-size:12px;line-height:18px;color:#e2e2e2;letter-spacing:-0.180px;left:30px;">Word Spacing</span>
<div style="left:177px;top:928px;width:94px;height:16px;background:#262626;border-radius:2px;"></div>
<span style="top:929.0px;font-size:11px;line-height:16px;color:#6a6a6a;left:179px;">W</span>
<span style="top:928.0px;font-size:12px;line-height:18px;color:#e2e2e2;letter-spacing:-0.229px;left:194px;">0.0</span>
<div style="left:15px;top:954px;width:9px;height:9px;border-radius:5px;border:1px solid #8a8a8a;box-sizing:border-box;"></div>
<span style="top:950.0px;font-size:12px;line-height:18px;color:#e2e2e2;letter-spacing:-0.366px;left:30px;">Line Spacing</span>
<div style="left:177px;top:950px;width:94px;height:16px;background:#262626;border-radius:2px;"></div>
<span style="top:951.0px;font-size:11px;line-height:16px;color:#6a6a6a;left:181px;">L</span>
<span style="top:950.0px;font-size:12px;line-height:18px;color:#e2e2e2;letter-spacing:-0.229px;left:194px;">0.0</span>
<div style="left:15px;top:976px;width:9px;height:9px;border-radius:5px;border:1px solid #8a8a8a;box-sizing:border-box;"></div>
<span style="top:972.0px;font-size:12px;line-height:18px;color:#e2e2e2;letter-spacing:-0.338px;left:30px;">Paragraph Spacing</span>
<div style="left:177px;top:972px;width:94px;height:16px;background:#262626;border-radius:2px;"></div>
<span style="top:973.0px;font-size:11px;line-height:16px;color:#6a6a6a;left:181px;">P</span>
<span style="top:972.0px;font-size:12px;line-height:18px;color:#e2e2e2;letter-spacing:-0.229px;left:194px;">0.0</span>
<div style="left:15px;top:998px;width:9px;height:9px;border-radius:5px;border:1px solid #8a8a8a;box-sizing:border-box;"></div>
<span style="top:994.0px;font-size:12px;line-height:18px;color:#e2e2e2;letter-spacing:-0.362px;left:30px;">Text Box Size</span>
<div style="left:177px;top:994px;width:94px;height:16px;background:#262626;border-radius:2px;"></div>
<span style="top:995.0px;font-size:11px;line-height:16px;color:#6a6a6a;left:179px;">W</span>
<span style="top:994.0px;font-size:12px;line-height:18px;color:#e2e2e2;letter-spacing:-0.006px;left:194px;">600.0</span>
<div style="left:277px;top:994px;width:94px;height:16px;background:#262626;border-radius:2px;"></div>
<span style="top:995.0px;font-size:11px;line-height:16px;color:#6a6a6a;left:281px;">H</span>
<span style="top:994.0px;font-size:12px;line-height:18px;color:#e2e2e2;letter-spacing:-0.006px;left:294px;">300.0</span>
<span style="top:994.0px;font-size:12px;line-height:18px;color:#e2e2e2;letter-spacing:0.328px;left:392px;">Auto</span>
<div style="left:424px;top:994px;width:16px;height:16px;background:#2a2a2a;border-radius:2px;"></div>
<span style="top:994.0px;font-size:12px;line-height:18px;color:#e2e2e2;left:445px;">/</span>
<div style="left:453px;top:994px;width:16px;height:16px;background:#2a2a2a;border-radius:2px;"></div>
<div style="left:7px;top:1014px;width:467px;height:10px;overflow:hidden">
<div style="left:8px;top:5px;width:9px;height:9px;border:1px solid #8a8a8a;border-radius:5px;box-sizing:border-box"></div>
<span style="left:23px;top:1px;font-size:12px;line-height:18px;color:#d8d8d8;letter-spacing:-0.4px">Shrink to Fit Text Box</span>
<div style="left:170px;top:3px;width:16px;height:16px;background:#2a2a2a;border-radius:2px"></div>
</div>
<div style="left:494px;top:85px;width:30px;height:528px;background:#444;"></div>
<div style="left:504px;top:90px;width:1px;height:1px;background:#aaa;"></div>
<div style="left:509px;top:90px;width:1px;height:1px;background:#aaa;"></div>
<div style="left:514px;top:90px;width:1px;height:1px;background:#aaa;"></div>
<div style="left:495px;top:96px;width:28px;height:28px;background:#1b1b1b;border-radius:3px;"></div>
<div style="left:530px;top:85px;width:1057px;height:22px;background:#1c1c1c;"></div>
<div style="left:530px;top:85px;width:79px;height:22px;background:#484848;border-radius:4px 4px 0 0;"></div>
<span style="top:88.0px;font-size:12px;line-height:18px;color:#e2e2e2;letter-spacing:-0.192px;left:536px;">Typing Text 2</span>
<div style="left:530px;top:107px;width:1057px;height:506px;background:#484848;"></div>
<div style="left:550px;top:127px;width:1037px;height:464px;background:#000;"></div>
<div style="left:677px;top:139px;width:782px;height:440px;background:#fff;"></div>
<span style="top:109.5px;font-size:10px;line-height:15px;color:#b4b4b4;left:536px;letter-spacing:-0.5px;">px</span>
<svg style="left:531px;top:107px" width="1056" height="20" viewBox="0 0 1056 20"><rect x="23.3" y="16" width="1" height="4" fill="#9a9a9a"/><rect x="35.5" y="16" width="1" height="4" fill="#9a9a9a"/><rect x="47.8" y="13" width="1" height="7" fill="#9a9a9a"/><rect x="60.0" y="16" width="1" height="4" fill="#9a9a9a"/><rect x="72.2" y="16" width="1" height="4" fill="#9a9a9a"/><rect x="84.4" y="16" width="1" height="4" fill="#9a9a9a"/><rect x="96.6" y="16" width="1" height="4" fill="#9a9a9a"/><rect x="108.8" y="13" width="1" height="7" fill="#9a9a9a"/><rect x="121.1" y="16" width="1" height="4" fill="#9a9a9a"/><rect x="133.3" y="16" width="1" height="4" fill="#9a9a9a"/><rect x="145.5" y="16" width="1" height="4" fill="#9a9a9a"/><rect x="157.7" y="16" width="1" height="4" fill="#9a9a9a"/><rect x="169.9" y="13" width="1" height="7" fill="#9a9a9a"/><rect x="182.2" y="16" width="1" height="4" fill="#9a9a9a"/><rect x="194.4" y="16" width="1" height="4" fill="#9a9a9a"/><rect x="206.6" y="16" width="1" height="4" fill="#9a9a9a"/><rect x="218.8" y="16" width="1" height="4" fill="#9a9a9a"/><rect x="231.0" y="13" width="1" height="7" fill="#9a9a9a"/><rect x="243.3" y="16" width="1" height="4" fill="#9a9a9a"/><rect x="255.5" y="16" width="1" height="4" fill="#9a9a9a"/><rect x="267.7" y="16" width="1" height="4" fill="#9a9a9a"/><rect x="279.9" y="16" width="1" height="4" fill="#9a9a9a"/><rect x="292.1" y="13" width="1" height="7" fill="#9a9a9a"/><rect x="304.3" y="16" width="1" height="4" fill="#9a9a9a"/><rect x="316.6" y="16" width="1" height="4" fill="#9a9a9a"/><rect x="328.8" y="16" width="1" height="4" fill="#9a9a9a"/><rect x="341.0" y="16" width="1" height="4" fill="#9a9a9a"/><rect x="353.2" y="13" width="1" height="7" fill="#9a9a9a"/><rect x="365.4" y="16" width="1" height="4" fill="#9a9a9a"/><rect x="377.7" y="16" width="1" height="4" fill="#9a9a9a"/><rect x="389.9" y="16" width="1" height="4" fill="#9a9a9a"/><rect x="402.1" y="16" width="1" height="4" fill="#9a9a9a"/><rect x="414.3" y="13" width="1" height="7" fill="#9a9a9a"/><rect x="426.5" y="16" width="1" height="4" fill="#9a9a9a"/><rect x="438.8" y="16" width="1" height="4" fill="#9a9a9a"/><rect x="451.0" y="16" width="1" height="4" fill="#9a9a9a"/><rect x="463.2" y="16" width="1" height="4" fill="#9a9a9a"/><rect x="475.4" y="13" width="1" height="7" fill="#9a9a9a"/><rect x="487.6" y="16" width="1" height="4" fill="#9a9a9a"/><rect x="499.8" y="16" width="1" height="4" fill="#9a9a9a"/><rect x="512.1" y="16" width="1" height="4" fill="#9a9a9a"/><rect x="524.3" y="16" width="1" height="4" fill="#9a9a9a"/><rect x="536.5" y="13" width="1" height="7" fill="#9a9a9a"/><rect x="548.7" y="16" width="1" height="4" fill="#9a9a9a"/><rect x="560.9" y="16" width="1" height="4" fill="#9a9a9a"/><rect x="573.2" y="16" width="1" height="4" fill="#9a9a9a"/><rect x="585.4" y="16" width="1" height="4" fill="#9a9a9a"/><rect x="597.6" y="13" width="1" height="7" fill="#9a9a9a"/><rect x="609.8" y="16" width="1" height="4" fill="#9a9a9a"/><rect x="622.0" y="16" width="1" height="4" fill="#9a9a9a"/><rect x="634.2" y="16" width="1" height="4" fill="#9a9a9a"/><rect x="646.5" y="16" width="1" height="4" fill="#9a9a9a"/><rect x="658.7" y="13" width="1" height="7" fill="#9a9a9a"/><rect x="670.9" y="16" width="1" height="4" fill="#9a9a9a"/><rect x="683.1" y="16" width="1" height="4" fill="#9a9a9a"/><rect x="695.3" y="16" width="1" height="4" fill="#9a9a9a"/><rect x="707.6" y="16" width="1" height="4" fill="#9a9a9a"/><rect x="719.8" y="13" width="1" height="7" fill="#9a9a9a"/><rect x="732.0" y="16" width="1" height="4" fill="#9a9a9a"/><rect x="744.2" y="16" width="1" height="4" fill="#9a9a9a"/><rect x="756.4" y="16" width="1" height="4" fill="#9a9a9a"/><rect x="768.7" y="16" width="1" height="4" fill="#9a9a9a"/><rect x="780.9" y="13" width="1" height="7" fill="#9a9a9a"/><rect x="793.1" y="16" width="1" height="4" fill="#9a9a9a"/><rect x="805.3" y="16" width="1" height="4" fill="#9a9a9a"/><rect x="817.5" y="16" width="1" height="4" fill="#9a9a9a"/><rect x="829.7" y="16" width="1" height="4" fill="#9a9a9a"/><rect x="842.0" y="13" width="1" height="7" fill="#9a9a9a"/><rect x="854.2" y="16" width="1" height="4" fill="#9a9a9a"/><rect x="866.4" y="16" width="1" height="4" fill="#9a9a9a"/><rect x="878.6" y="16" width="1" height="4" fill="#9a9a9a"/><rect x="890.8" y="16" width="1" height="4" fill="#9a9a9a"/><rect x="903.1" y="13" width="1" height="7" fill="#9a9a9a"/><rect x="915.3" y="16" width="1" height="4" fill="#9a9a9a"/><rect x="927.5" y="16" width="1" height="4" fill="#9a9a9a"/><rect x="939.7" y="16" width="1" height="4" fill="#9a9a9a"/><rect x="951.9" y="16" width="1" height="4" fill="#9a9a9a"/><rect x="964.2" y="13" width="1" height="7" fill="#9a9a9a"/><rect x="976.4" y="16" width="1" height="4" fill="#9a9a9a"/><rect x="988.6" y="16" width="1" height="4" fill="#9a9a9a"/><rect x="1000.8" y="16" width="1" height="4" fill="#9a9a9a"/><rect x="1013.0" y="16" width="1" height="4" fill="#9a9a9a"/><rect x="1025.2" y="13" width="1" height="7" fill="#9a9a9a"/><rect x="1037.5" y="16" width="1" height="4" fill="#9a9a9a"/><rect x="1049.7" y="16" width="1" height="4" fill="#9a9a9a"/></svg>
<span style="top:106.5px;font-size:11px;line-height:16px;color:#b8b8b8;left:565.7px;letter-spacing:-0.3px;">-1200</span>
<span style="top:106.5px;font-size:11px;line-height:16px;color:#b8b8b8;left:626.7px;letter-spacing:-0.3px;">-1050</span>
<span style="top:106.5px;font-size:11px;line-height:16px;color:#b8b8b8;left:690.6px;letter-spacing:-0.3px;">-900</span>
<span style="top:106.5px;font-size:11px;line-height:16px;color:#b8b8b8;left:752.6px;letter-spacing:-0.3px;">-750</span>
<span style="top:106.5px;font-size:11px;line-height:16px;color:#b8b8b8;left:813.6px;letter-spacing:-0.3px;">-600</span>
<span style="top:106.5px;font-size:11px;line-height:16px;color:#b8b8b8;left:874.6px;letter-spacing:-0.3px;">-450</span>
<span style="top:106.5px;font-size:11px;line-height:16px;color:#b8b8b8;left:935.6px;letter-spacing:-0.3px;">-300</span>
<span style="top:106.5px;font-size:11px;line-height:16px;color:#b8b8b8;left:996.6px;letter-spacing:-0.3px;">-150</span>
<span style="top:106.5px;font-size:11px;line-height:16px;color:#b8b8b8;left:1065.1px;letter-spacing:-0.3px;">0</span>
<span style="top:106.5px;font-size:11px;line-height:16px;color:#b8b8b8;left:1120.3px;letter-spacing:-0.3px;">150</span>
<span style="top:106.5px;font-size:11px;line-height:16px;color:#b8b8b8;left:1181.3px;letter-spacing:-0.3px;">300</span>
<span style="top:106.5px;font-size:11px;line-height:16px;color:#b8b8b8;left:1242.3px;letter-spacing:-0.3px;">450</span>
<span style="top:106.5px;font-size:11px;line-height:16px;color:#b8b8b8;left:1303.3px;letter-spacing:-0.3px;">600</span>
<span style="top:106.5px;font-size:11px;line-height:16px;color:#b8b8b8;left:1364.3px;letter-spacing:-0.3px;">750</span>
<span style="top:106.5px;font-size:11px;line-height:16px;color:#b8b8b8;left:1426.3px;letter-spacing:-0.3px;">900</span>
<span style="top:106.5px;font-size:11px;line-height:16px;color:#b8b8b8;left:1484.4px;letter-spacing:-0.3px;">1050</span>
<span style="top:106.5px;font-size:11px;line-height:16px;color:#b8b8b8;left:1545.4px;letter-spacing:-0.3px;">1200</span>
<svg style="left:531px;top:127px" width="19" height="464" viewBox="0 0 19 464"><rect x="15" y="451.4" width="4" height="1" fill="#9a9a9a"/><rect x="15" y="439.2" width="4" height="1" fill="#9a9a9a"/><rect x="15" y="427.0" width="4" height="1" fill="#9a9a9a"/><rect x="12" y="414.8" width="7" height="1" fill="#9a9a9a"/><rect x="15" y="402.6" width="4" height="1" fill="#9a9a9a"/><rect x="15" y="390.3" width="4" height="1" fill="#9a9a9a"/><rect x="15" y="378.1" width="4" height="1" fill="#9a9a9a"/><rect x="15" y="365.9" width="4" height="1" fill="#9a9a9a"/><rect x="12" y="353.7" width="7" height="1" fill="#9a9a9a"/><rect x="15" y="341.5" width="4" height="1" fill="#9a9a9a"/><rect x="15" y="329.2" width="4" height="1" fill="#9a9a9a"/><rect x="15" y="317.0" width="4" height="1" fill="#9a9a9a"/><rect x="15" y="304.8" width="4" height="1" fill="#9a9a9a"/><rect x="12" y="292.6" width="7" height="1" fill="#9a9a9a"/><rect x="15" y="280.4" width="4" height="1" fill="#9a9a9a"/><rect x="15" y="268.2" width="4" height="1" fill="#9a9a9a"/><rect x="15" y="255.9" width="4" height="1" fill="#9a9a9a"/><rect x="15" y="243.7" width="4" height="1" fill="#9a9a9a"/><rect x="12" y="231.5" width="7" height="1" fill="#9a9a9a"/><rect x="15" y="219.3" width="4" height="1" fill="#9a9a9a"/><rect x="15" y="207.1" width="4" height="1" fill="#9a9a9a"/><rect x="15" y="194.8" width="4" height="1" fill="#9a9a9a"/><rect x="15" y="182.6" width="4" height="1" fill="#9a9a9a"/><rect x="12" y="170.4" width="7" height="1" fill="#9a9a9a"/><rect x="15" y="158.2" width="4" height="1" fill="#9a9a9a"/><rect x="15" y="146.0" width="4" height="1" fill="#9a9a9a"/><rect x="15" y="133.8" width="4" height="1" fill="#9a9a9a"/><rect x="15" y="121.5" width="4" height="1" fill="#9a9a9a"/><rect x="12" y="109.3" width="7" height="1" fill="#9a9a9a"/><rect x="15" y="97.1" width="4" height="1" fill="#9a9a9a"/><rect x="15" y="84.9" width="4" height="1" fill="#9a9a9a"/><rect x="15" y="72.7" width="4" height="1" fill="#9a9a9a"/><rect x="15" y="60.4" width="4" height="1" fill="#9a9a9a"/><rect x="12" y="48.2" width="7" height="1" fill="#9a9a9a"/><rect x="15" y="36.0" width="4" height="1" fill="#9a9a9a"/><rect x="15" y="23.8" width="4" height="1" fill="#9a9a9a"/><rect x="15" y="11.6" width="4" height="1" fill="#9a9a9a"/></svg>
<span style="left:537px;top:542.3px;font-size:11px;line-height:12px;color:#b8b8b8;letter-spacing:-0.3px;transform:translate(-50%,-50%) rotate(-90deg);transform-origin:center">-450</span>
<span style="left:537px;top:481.2px;font-size:11px;line-height:12px;color:#b8b8b8;letter-spacing:-0.3px;transform:translate(-50%,-50%) rotate(-90deg);transform-origin:center">-300</span>
<span style="left:537px;top:420.1px;font-size:11px;line-height:12px;color:#b8b8b8;letter-spacing:-0.3px;transform:translate(-50%,-50%) rotate(-90deg);transform-origin:center">-150</span>
<span style="left:537px;top:359.0px;font-size:11px;line-height:12px;color:#b8b8b8;letter-spacing:-0.3px;transform:translate(-50%,-50%) rotate(-90deg);transform-origin:center">0</span>
<span style="left:537px;top:297.9px;font-size:11px;line-height:12px;color:#b8b8b8;letter-spacing:-0.3px;transform:translate(-50%,-50%) rotate(-90deg);transform-origin:center">150</span>
<span style="left:537px;top:236.8px;font-size:11px;line-height:12px;color:#b8b8b8;letter-spacing:-0.3px;transform:translate(-50%,-50%) rotate(-90deg);transform-origin:center">300</span>
<span style="left:537px;top:175.7px;font-size:11px;line-height:12px;color:#b8b8b8;letter-spacing:-0.3px;transform:translate(-50%,-50%) rotate(-90deg);transform-origin:center">450</span>
<span style="top:316.0px;font-size:52px;line-height:78px;color:#606060;font-weight:700;letter-spacing:-0.519px;left:804.3px;-webkit-text-stroke:0.9px #606060;transform:scaleX(1.05);transform-origin:0 50%;">Cavalry</span>
<span style="top:316.0px;font-size:52px;line-height:78px;color:#606060;font-weight:700;letter-spacing:0.414px;left:1014px;-webkit-text-stroke:0.9px #606060;transform:scaleX(1.05);transform-origin:0 50%;">Typing</span>
<span style="top:316.0px;font-size:52px;line-height:78px;color:#606060;font-weight:700;letter-spacing:0.544px;left:1208.5px;-webkit-text-stroke:0.9px #606060;transform:scaleX(1.05);transform-origin:0 50%;">Text</span>
<div style="left:1323px;top:331px;width:7px;height:47px;background:#606060;"></div>
<span style="top:491.6px;font-size:12px;line-height:18px;color:#e6e6e6;letter-spacing:-0.339px;left:569px;">Hold S</span>
<span style="top:491.6px;font-size:12px;line-height:18px;color:rgba(150,150,150,0.75);letter-spacing:-0.119px;left:603px;"> Direct Layer Selection</span>
<span style="top:505.6px;font-size:12px;line-height:18px;color:#e6e6e6;letter-spacing:-0.806px;left:569px;">Space</span>
<span style="top:505.6px;font-size:12px;line-height:18px;color:rgba(150,150,150,0.75);letter-spacing:-0.276px;left:599px;"> Play/ Stop</span>
<span style="top:519.6px;font-size:12px;line-height:18px;color:#e6e6e6;letter-spacing:-0.387px;left:569px;">Space + click + drag</span>
<span style="top:519.6px;font-size:12px;line-height:18px;color:rgba(150,150,150,0.75);letter-spacing:-0.172px;left:670px;"> Pan</span>
<span style="top:533.6px;font-size:12px;line-height:18px;color:#e6e6e6;letter-spacing:-0.151px;left:569px;">Alt + click + drag</span>
<span style="top:533.6px;font-size:12px;line-height:18px;color:rgba(150,150,150,0.75);letter-spacing:0.037px;left:655px;"> Move Pivot Point</span>
<span style="top:547.6px;font-size:12px;line-height:18px;color:#e6e6e6;left:569px;">Shift</span>
<span style="top:547.6px;font-size:12px;line-height:18px;color:rgba(150,150,150,0.75);letter-spacing:-0.297px;left:593px;"> Enable Snapping</span>
<span style="top:567.5px;font-size:12px;line-height:18px;color:#e6e6e6;letter-spacing:0.145px;left:569px;">00:00:03:28</span>
<span style="top:567.3px;font-size:12px;line-height:18px;color:#e6e6e6;letter-spacing:0.114px;left:998px;text-shadow:0 1px 0 #000,0 0 1px #000;">Viewport Quality: High</span>
<div style="left:535px;top:594px;width:78px;height:16px;background:#2e2e2e;border-radius:3px;"></div>
<span style="top:594.0px;font-size:12px;line-height:18px;color:#e2e2e2;letter-spacing:-0.677px;left:539px;">41%</span>
<div style="left:866px;top:592px;width:100px;height:20px;background:#333;border-radius:3px;"></div>
<div style="left:867px;top:593px;width:19px;height:18px;background:#2a2a2a;border-radius:2px;border:1px solid #444;box-sizing:border-box;"></div>
<div style="left:887px;top:593px;width:19px;height:18px;background:#2a2a2a;border-radius:2px;border:1px solid #444;box-sizing:border-box;"></div>
<div style="left:906px;top:593px;width:19px;height:18px;background:#2a2a2a;border-radius:2px;border:1px solid #444;box-sizing:border-box;"></div>
<div style="left:926px;top:593px;width:19px;height:18px;background:#2a2a2a;border-radius:2px;border:1px solid #444;box-sizing:border-box;"></div>
<div style="left:946px;top:593px;width:19px;height:18px;background:#2a2a2a;border-radius:2px;border:1px solid #444;box-sizing:border-box;"></div>
<div style="left:971px;top:592px;width:20px;height:20px;background:#2a2a2a;border-radius:3px;border:1px solid #444;box-sizing:border-box;"></div>
<div style="left:1232px;top:593px;width:37px;height:18px;background:#2e2e2e;border-radius:2px;"></div>
<span style="top:594.0px;font-size:12px;line-height:18px;color:#aaa;left:1258px;">0</span>
<div style="left:1272px;top:592px;width:32px;height:20px;background:#2a2a2a;border-radius:3px;border:1px solid #444;box-sizing:border-box;"></div>
<div style="left:1307px;top:592px;width:32px;height:20px;background:#2a2a2a;border-radius:3px;border:1px solid #444;box-sizing:border-box;"></div>
<div style="left:1342px;top:592px;width:32px;height:20px;background:#2a2a2a;border-radius:3px;border:1px solid #444;box-sizing:border-box;"></div>
<div style="left:1377px;top:592px;width:20px;height:20px;background:#2a2a2a;border-radius:3px;border:1px solid #444;box-sizing:border-box;"></div>
<div style="left:1400px;top:592px;width:20px;height:20px;background:#2a2a2a;border-radius:3px;border:1px solid #444;box-sizing:border-box;"></div>
<div style="left:1423px;top:592px;width:32px;height:20px;background:#2a2a2a;border-radius:3px;border:1px solid #444;box-sizing:border-box;"></div>
<div style="left:1458px;top:592px;width:32px;height:20px;background:#2a2a2a;border-radius:3px;border:1px solid #444;box-sizing:border-box;"></div>
<div style="left:1493px;top:592px;width:32px;height:20px;background:#2a2a2a;border-radius:3px;border:1px solid #444;box-sizing:border-box;"></div>
<div style="left:1528px;top:592px;width:32px;height:20px;background:#2a2a2a;border-radius:3px;border:1px solid #444;box-sizing:border-box;"></div>
<div style="left:1563px;top:592px;width:20px;height:20px;background:#2a2a2a;border-radius:3px;border:1px solid #444;box-sizing:border-box;"></div>
<div style="left:1593px;top:85px;width:321px;height:22px;background:#1c1c1c;"></div>
<div style="left:1593px;top:85px;width:40px;height:22px;background:#464646;border-radius:4px 4px 0 0;"></div>
<span style="top:88.0px;font-size:12px;line-height:18px;color:#e2e2e2;letter-spacing:0.263px;left:1598px;">Color</span>
<div style="left:1634px;top:85px;width:69px;height:22px;background:#252525;border-radius:4px 4px 0 0;"></div>
<span style="top:88.0px;font-size:12px;line-height:18px;color:#e2e2e2;letter-spacing:-0.170px;left:1639px;">Add Layers</span>
<div style="left:1593px;top:107px;width:321px;height:410px;background:#464646;"></div>
<div style="left:1896px;top:107px;width:4px;height:410px;background:#3c3c3c;"></div>
<div style="left:1903px;top:109px;width:9px;height:355px;background:#565656;border-radius:4.5px;"></div>
<div style="left:1646px;top:120px;width:200px;height:200px;border-radius:50%;background:conic-gradient(from 90deg,#ff0000,#ff00ff,#0000ff,#00ffff,#00ff00,#ffff00,#ff0000);-webkit-mask:radial-gradient(circle closest-side,transparent 74px,#000 75px,#000 99.5px,transparent 100.5px);mask:radial-gradient(circle closest-side,transparent 74px,#000 75px,#000 99.5px,transparent 100.5px)"></div>
<div style="left:1702px;top:176px;width:90px;height:90px;background:linear-gradient(to right,#000,rgba(0,0,0,0)),linear-gradient(to bottom,#fff,#f00)"></div>
<div style="left:1739px;top:170px;width:13px;height:13px;border-radius:7px;border:1px solid #e8e8e8;box-sizing:border-box;"></div>
<div style="left:1827px;top:214px;width:13px;height:13px;border-radius:7px;border:1px solid #f0f0f0;box-sizing:border-box;"></div>
<div style="left:1600px;top:333px;width:22px;height:22px;background:#7a7a7a;border-radius:3px;"></div>
<span style="top:336.0px;font-size:12px;line-height:18px;color:#e2e2e2;letter-spacing:-0.254px;left:1625px;">Gray</span>
<div style="left:1872px;top:333px;width:22px;height:22px;background:#262626;border-radius:3px;border:1px solid #555;box-sizing:border-box;"></div>
<div style="left:1600px;top:361px;width:49px;height:16px;background:#3a3a3a;border-radius:2px;border:1px solid #585858;box-sizing:border-box;"></div>
<span style="top:361.0px;font-size:12px;line-height:18px;color:#e2e2e2;letter-spacing:-0.448px;left:1603px;">Hex</span>
<div style="left:1653px;top:358px;width:241px;height:21px;background:#262626;border-radius:3px;"></div>
<span style="top:362.0px;font-size:11px;line-height:16px;color:#555;left:1658px;">#</span>
<span style="top:361.0px;font-size:12px;line-height:18px;color:#e2e2e2;letter-spacing:-0.174px;left:1670px;">7a7a7a</span>
<div style="left:1600px;top:390px;width:234px;height:4px;background:#e0e0e0;border-radius:2px;"></div>
<div style="left:1829px;top:387px;width:10px;height:10px;background:#6fcfb0;border-radius:5px;border:1px solid #4a9a80;box-sizing:border-box;"></div>
<div style="left:1850px;top:384px;width:43px;height:16px;background:#262626;border-radius:2px;"></div>
<span style="top:385.0px;font-size:11px;line-height:16px;color:#555;left:1854px;">A</span>
<span style="top:384.0px;font-size:12px;line-height:18px;color:#e2e2e2;letter-spacing:-0.010px;left:1866px;">255</span>
<div style="left:1598px;top:406px;width:298px;height:22px;background:#222;"></div>
<div style="left:1600px;top:408px;width:147px;height:20px;background:#464646;border-radius:3px 3px 0 0;"></div>
<span style="top:409.0px;font-size:12px;line-height:18px;color:#e2e2e2;letter-spacing:-0.254px;left:1648.0px;">Swatches</span>
<span style="top:409.0px;font-size:12px;line-height:18px;color:#bdbdbd;left:1793.0px;">Generator</span>
<div style="left:1599px;top:432px;width:256px;height:17px;background:#555;border-radius:3px;"></div>
<div style="left:1599px;top:432px;width:62px;height:17px;background:#262626;border-radius:3px;border:1px solid #555;box-sizing:border-box;"></div>
<span style="top:431.7px;font-size:12px;line-height:18px;color:#e2e2e2;letter-spacing:0.045px;left:1621px;">Library</span>
<span style="top:431.7px;font-size:12px;line-height:18px;color:#e2e2e2;letter-spacing:0.092px;left:1686px;">Project</span>
<span style="top:431.7px;font-size:12px;line-height:18px;color:#e2e2e2;letter-spacing:-0.606px;left:1752px;">Scene</span>
<span style="top:431.7px;font-size:12px;line-height:18px;color:#e2e2e2;letter-spacing:-0.229px;left:1816px;">Labels</span>
<div style="left:1858px;top:432px;width:37px;height:17px;background:#555;border-radius:3px;"></div>
<div style="left:1858px;top:432px;width:18px;height:17px;background:#262626;border-radius:3px;border:1px solid #555;box-sizing:border-box;"></div>
<div style="left:1599px;top:453px;width:275px;height:16px;background:#4e4e4e;border-radius:2px;border:1px solid #5a5a5a;box-sizing:border-box;"></div>
<span style="top:453.0px;font-size:12px;line-height:18px;color:#e2e2e2;letter-spacing:0.273px;left:1601px;">Bright</span>
<div style="left:1880px;top:461px;width:2px;height:2px;background:#ccc;"></div>
<div style="left:1885px;top:461px;width:2px;height:2px;background:#ccc;"></div>
<div style="left:1890px;top:461px;width:2px;height:2px;background:#ccc;"></div>
<div style="left:1598px;top:470px;width:298px;height:47px;background:#262626;"></div>
<div style="left:1600px;top:473px;width:18px;height:17px;background:#a55fc6;border-radius:3px;"></div>
<div style="left:1622px;top:473px;width:18px;height:17px;background:#08c7f2;border-radius:3px;"></div>
<div style="left:1644px;top:473px;width:18px;height:17px;background:#f6e30a;border-radius:3px;"></div>
<div style="left:1666px;top:473px;width:18px;height:17px;background:#f57a05;border-radius:3px;"></div>
<div style="left:1688px;top:473px;width:18px;height:17px;background:#ef0a0a;border-radius:3px;"></div>
<div style="left:1593px;top:523px;width:321px;height:22px;background:#1c1c1c;"></div>
<div style="left:1593px;top:523px;width:39px;height:22px;background:#464646;border-radius:4px 4px 0 0;"></div>
<span style="top:526.0px;font-size:12px;line-height:18px;color:#e2e2e2;letter-spacing:0.263px;left:1598px;">Align</span>
<div style="left:1593px;top:545px;width:321px;height:68px;background:#464646;"></div>
<span style="top:555.6px;font-size:12px;line-height:18px;color:#e2e2e2;letter-spacing:0.069px;left:1601px;">Alignment</span>
<span style="top:583.6px;font-size:12px;line-height:18px;color:#e2e2e2;letter-spacing:0.247px;left:1601px;">Distribution</span>
<div style="left:1790px;top:556px;width:54px;height:17px;background:#222;border-radius:3px;border:1px solid #5a5a5a;box-sizing:border-box;"></div>
<div style="left:1852px;top:556px;width:54px;height:17px;background:#222;border-radius:3px;border:1px solid #5a5a5a;box-sizing:border-box;"></div>
<div style="left:1790px;top:584px;width:54px;height:17px;background:#222;border-radius:3px;border:1px solid #5a5a5a;box-sizing:border-box;"></div>
<div style="left:494px;top:619px;width:1420px;height:22px;background:#1c1c1c;"></div>
<div style="left:494px;top:619px;width:88px;height:22px;background:#3d3d3d;border-radius:4px 4px 0 0;"></div>
<span style="top:622.0px;font-size:12px;line-height:18px;color:#e2e2e2;letter-spacing:-0.254px;left:500px;">Scene Window</span>
<div style="left:584px;top:619px;width:99px;height:22px;background:#252525;border-radius:4px 4px 0 0;"></div>
<span style="top:622.0px;font-size:12px;line-height:18px;color:#e2e2e2;letter-spacing:-0.100px;left:589px;">JavaScript Editor</span>
<div style="left:685px;top:619px;width:112px;height:22px;background:#252525;border-radius:4px 4px 0 0;"></div>
<span style="top:622.0px;font-size:12px;line-height:18px;color:#e2e2e2;letter-spacing:-0.192px;left:690px;">Dependency Graph</span>
<div style="left:494px;top:641px;width:1420px;height:359px;background:#282828;"></div>
<div style="left:494px;top:641px;width:1420px;height:22px;background:#282828;"></div>
<span style="top:643.7px;font-size:12px;line-height:18px;color:#a8a8a8;letter-spacing:-0.120px;left:665.0px;">Jumping Text Coloring</span>
<span style="top:643.7px;font-size:12px;line-height:18px;color:#a8a8a8;letter-spacing:-0.155px;left:1155.5px;">Typing Text 01</span>
<div style="left:1439px;top:643px;width:470px;height:20px;background:#464646;border-radius:4px 4px 0 0;"></div>
<span style="top:643.7px;font-size:12px;line-height:18px;color:#e2e2e2;letter-spacing:-0.192px;left:1629.0px;">Typing Text 2</span>
<span style="top:645.0px;font-size:11px;line-height:16px;color:#999;left:968px;">|</span>
<div style="left:494px;top:663px;width:458px;height:24px;background:#3a3a3a;"></div>
<div style="left:498px;top:665px;width:246px;height:20px;background:#222;border-radius:10px;"></div>
<span style="top:667.0px;font-size:12px;line-height:18px;color:#8c8c8c;letter-spacing:-0.244px;left:520px;">Enter a layer name</span>
<div style="left:747px;top:665px;width:19px;height:20px;background:#262626;border-radius:3px;border:1px solid #444;box-sizing:border-box;"></div>
<div style="left:790px;top:665px;width:19px;height:20px;background:#262626;border-radius:3px;border:1px solid #444;box-sizing:border-box;"></div>
<div style="left:812px;top:665px;width:19px;height:20px;background:#262626;border-radius:3px;border:1px solid #444;box-sizing:border-box;"></div>
<div style="left:834px;top:665px;width:19px;height:20px;background:#262626;border-radius:3px;border:1px solid #444;box-sizing:border-box;"></div>
<div style="left:856px;top:665px;width:94px;height:20px;background:#262626;border-radius:3px;"></div>
<span style="top:668.0px;font-size:11px;line-height:16px;color:#555;left:861px;">F</span>
<span style="top:667.0px;font-size:12px;line-height:18px;color:#e2e2e2;letter-spacing:0.286px;left:873px;">118</span>
<div style="left:494px;top:687px;width:458px;height:18px;background:#464646;"></div>
<span style="top:687.7px;font-size:12px;line-height:18px;color:#e2e2e2;letter-spacing:-0.254px;left:649px;">Name</span>
<div style="left:494px;top:705px;width:444px;height:22px;background:#383838;"></div>
<div style="left:497px;top:708px;width:17px;height:17px;background:#2d2d2d;border-radius:2px;"></div>
<div style="left:516px;top:708px;width:17px;height:17px;background:#2d2d2d;border-radius:2px;"></div>
<div style="left:535px;top:708px;width:17px;height:17px;background:#2d2d2d;border-radius:2px;"></div>
<div style="left:573px;top:708px;width:17px;height:17px;background:#b58cff;border-radius:2px;"></div>
<div style="left:494px;top:727px;width:444px;height:22px;background:#383838;"></div>
<div style="left:497px;top:730px;width:17px;height:17px;background:#2d2d2d;border-radius:2px;"></div>
<div style="left:516px;top:730px;width:17px;height:17px;background:#2d2d2d;border-radius:2px;"></div>
<div style="left:535px;top:730px;width:17px;height:17px;background:#2d2d2d;border-radius:2px;"></div>
<div style="left:573px;top:730px;width:17px;height:17px;background:#b58cff;border-radius:2px;"></div>
<div style="left:494px;top:749px;width:444px;height:22px;background:#383838;"></div>
<div style="left:497px;top:752px;width:17px;height:17px;background:#2d2d2d;border-radius:2px;"></div>
<div style="left:516px;top:752px;width:17px;height:17px;background:#2d2d2d;border-radius:2px;"></div>
<div style="left:535px;top:752px;width:17px;height:17px;background:#2d2d2d;border-radius:2px;"></div>
<div style="left:573px;top:752px;width:17px;height:17px;background:#b58cff;border-radius:2px;"></div>
<div style="left:610px;top:708px;width:32px;height:17px;background:#333;border-radius:2px;"></div>
<div style="left:629px;top:730px;width:32px;height:17px;background:#333;border-radius:2px;"></div>
<span style="top:707.7px;font-size:12px;line-height:18px;color:#e2e2e2;letter-spacing:0.246px;left:667px;">Main</span>
<span style="top:729.7px;font-size:12px;line-height:18px;color:#9c9c9c;letter-spacing:-0.173px;left:686px;">Cavalry Typing Text</span>
<span style="top:751.7px;font-size:12px;line-height:18px;color:#9c9c9c;left:705px;">Cursor</span>
<div style="left:897px;top:708px;width:22px;height:17px;background:#2d2d2d;border-radius:3px;"></div>
<div style="left:925px;top:712px;width:9px;height:9px;border-radius:5px;border:1px solid #8a8a8a;box-sizing:border-box;"></div>
<div style="left:897px;top:730px;width:22px;height:17px;background:#2d2d2d;border-radius:3px;"></div>
<div style="left:925px;top:734px;width:9px;height:9px;border-radius:5px;border:1px solid #8a8a8a;box-sizing:border-box;"></div>
<div style="left:897px;top:752px;width:22px;height:17px;background:#2d2d2d;border-radius:3px;"></div>
<div style="left:925px;top:756px;width:9px;height:9px;border-radius:5px;border:1px solid #8a8a8a;box-sizing:border-box;"></div>
<div style="left:938px;top:705px;width:14px;height:66px;background:#383838;"></div>
<div style="left:940px;top:706px;width:10px;height:254px;background:#505050;border-radius:5px;"></div>
<div style="left:673px;top:746px;width:139px;height:28px;border:3px solid #beeb1e;box-sizing:border-box;"></div>
<span style="top:775.5px;font-size:20px;line-height:30px;color:#beeb1e;font-weight:700;letter-spacing:0.038px;left:684px;-webkit-text-stroke:0.3px #beeb1e;">rename to cursor</span>
<div style="left:495px;top:964px;width:442px;height:10px;background:#4e4e4e;border-radius:5px;"></div>
<div style="left:938px;top:961px;width:14px;height:15px;background:#2a2a2a;border:1px solid #363636;box-sizing:border-box;"></div>
<div style="left:494px;top:976px;width:458px;height:22px;background:#444;"></div>
<div style="left:497px;top:977px;width:20px;height:20px;background:#2a2a2a;border-radius:4px;border:1px solid #1c1c1c;box-sizing:border-box;"></div>
<div style="left:744px;top:978px;width:19px;height:19px;background:#262626;border-radius:3px;border:1px solid #444;box-sizing:border-box;"></div>
<div style="left:767px;top:979px;width:182px;height:17px;background:#5f5f5f;border-radius:3px;"></div>
<div style="left:767px;top:979px;width:86px;height:17px;background:#262626;border-radius:3px;border:1px solid #5a5a5a;box-sizing:border-box;"></div>
<span style="top:978.7px;font-size:12px;line-height:18px;color:#e2e2e2;letter-spacing:0.009px;left:789px;">Time Editor</span>
<span style="top:978.7px;font-size:12px;line-height:18px;color:#e2e2e2;left:878px;">Graph Editor</span>
<div style="left:952px;top:663px;width:7px;height:42px;background:#1e1e1e;"></div>
<div style="left:956px;top:705px;width:12px;height:256px;background:#1d1d1d;"></div>
<div style="left:959px;top:705px;width:9px;height:21px;background:#303030;"></div>
<div style="left:954px;top:824px;width:2px;height:1px;background:#8c8c8c;"></div>
<div style="left:954px;top:827px;width:2px;height:1px;background:#8c8c8c;"></div>
<div style="left:954px;top:830px;width:2px;height:1px;background:#8c8c8c;"></div>
<div style="left:954px;top:833px;width:2px;height:1px;background:#8c8c8c;"></div>
<div style="left:954px;top:836px;width:2px;height:1px;background:#8c8c8c;"></div>
<div style="left:954px;top:839px;width:2px;height:1px;background:#8c8c8c;"></div>
<div style="left:959px;top:663px;width:955px;height:24px;background:#242424;"></div>
<div style="left:968px;top:704px;width:946px;height:66px;background:#1d1d1d;"></div>
<svg style="left:960px;top:663px" width="953" height="24" viewBox="0 0 953 24"><rect x="7.2" y="17" width="1" height="7" fill="#9c9c9c"/><rect x="22.8" y="20.5" width="1" height="3.5" fill="#9c9c9c"/><rect x="38.5" y="20.5" width="1" height="3.5" fill="#9c9c9c"/><rect x="54.1" y="20.5" width="1" height="3.5" fill="#9c9c9c"/><rect x="69.7" y="20.5" width="1" height="3.5" fill="#9c9c9c"/><rect x="85.4" y="17" width="1" height="7" fill="#9c9c9c"/><rect x="101.0" y="20.5" width="1" height="3.5" fill="#9c9c9c"/><rect x="116.6" y="20.5" width="1" height="3.5" fill="#9c9c9c"/><rect x="132.3" y="20.5" width="1" height="3.5" fill="#9c9c9c"/><rect x="147.9" y="20.5" width="1" height="3.5" fill="#9c9c9c"/><rect x="163.5" y="17" width="1" height="7" fill="#9c9c9c"/><rect x="179.2" y="20.5" width="1" height="3.5" fill="#9c9c9c"/><rect x="194.8" y="20.5" width="1" height="3.5" fill="#9c9c9c"/><rect x="210.4" y="20.5" width="1" height="3.5" fill="#9c9c9c"/><rect x="226.1" y="20.5" width="1" height="3.5" fill="#9c9c9c"/><rect x="241.7" y="17" width="1" height="7" fill="#9c9c9c"/><rect x="257.3" y="20.5" width="1" height="3.5" fill="#9c9c9c"/><rect x="273.0" y="20.5" width="1" height="3.5" fill="#9c9c9c"/><rect x="288.6" y="20.5" width="1" height="3.5" fill="#9c9c9c"/><rect x="304.2" y="20.5" width="1" height="3.5" fill="#9c9c9c"/><rect x="319.9" y="17" width="1" height="7" fill="#9c9c9c"/><rect x="335.5" y="20.5" width="1" height="3.5" fill="#9c9c9c"/><rect x="351.1" y="20.5" width="1" height="3.5" fill="#9c9c9c"/><rect x="366.8" y="20.5" width="1" height="3.5" fill="#9c9c9c"/><rect x="382.4" y="20.5" width="1" height="3.5" fill="#9c9c9c"/><rect x="398.1" y="17" width="1" height="7" fill="#9c9c9c"/><rect x="413.7" y="20.5" width="1" height="3.5" fill="#9c9c9c"/><rect x="429.3" y="20.5" width="1" height="3.5" fill="#9c9c9c"/><rect x="445.0" y="20.5" width="1" height="3.5" fill="#9c9c9c"/><rect x="460.6" y="20.5" width="1" height="3.5" fill="#9c9c9c"/><rect x="476.2" y="17" width="1" height="7" fill="#9c9c9c"/><rect x="491.9" y="20.5" width="1" height="3.5" fill="#9c9c9c"/><rect x="507.5" y="20.5" width="1" height="3.5" fill="#9c9c9c"/><rect x="523.1" y="20.5" width="1" height="3.5" fill="#9c9c9c"/><rect x="538.8" y="20.5" width="1" height="3.5" fill="#9c9c9c"/><rect x="554.4" y="17" width="1" height="7" fill="#9c9c9c"/><rect x="570.0" y="20.5" width="1" height="3.5" fill="#9c9c9c"/><rect x="585.7" y="20.5" width="1" height="3.5" fill="#9c9c9c"/><rect x="601.3" y="20.5" width="1" height="3.5" fill="#9c9c9c"/><rect x="616.9" y="20.5" width="1" height="3.5" fill="#9c9c9c"/><rect x="632.6" y="17" width="1" height="7" fill="#9c9c9c"/><rect x="648.2" y="20.5" width="1" height="3.5" fill="#9c9c9c"/><rect x="663.8" y="20.5" width="1" height="3.5" fill="#9c9c9c"/><rect x="679.5" y="20.5" width="1" height="3.5" fill="#9c9c9c"/><rect x="695.1" y="20.5" width="1" height="3.5" fill="#9c9c9c"/><rect x="710.7" y="17" width="1" height="7" fill="#9c9c9c"/><rect x="726.4" y="20.5" width="1" height="3.5" fill="#9c9c9c"/><rect x="742.0" y="20.5" width="1" height="3.5" fill="#9c9c9c"/><rect x="757.6" y="20.5" width="1" height="3.5" fill="#9c9c9c"/><rect x="773.3" y="20.5" width="1" height="3.5" fill="#9c9c9c"/><rect x="788.9" y="17" width="1" height="7" fill="#9c9c9c"/><rect x="804.5" y="20.5" width="1" height="3.5" fill="#9c9c9c"/><rect x="820.2" y="20.5" width="1" height="3.5" fill="#9c9c9c"/><rect x="835.8" y="20.5" width="1" height="3.5" fill="#9c9c9c"/><rect x="851.4" y="20.5" width="1" height="3.5" fill="#9c9c9c"/><rect x="867.1" y="17" width="1" height="7" fill="#9c9c9c"/><rect x="882.7" y="20.5" width="1" height="3.5" fill="#9c9c9c"/><rect x="898.3" y="20.5" width="1" height="3.5" fill="#9c9c9c"/><rect x="914.0" y="20.5" width="1" height="3.5" fill="#9c9c9c"/><rect x="929.6" y="20.5" width="1" height="3.5" fill="#9c9c9c"/><rect x="945.2" y="17" width="1" height="7" fill="#9c9c9c"/></svg>
<span style="top:662.5px;font-size:12px;line-height:18px;color:#e2e2e2;left:962.8px;letter-spacing:-0.2px;">0</span>
<span style="top:662.5px;font-size:12px;line-height:18px;color:#e2e2e2;left:1038.5px;letter-spacing:-0.2px;">10</span>
<span style="top:662.5px;font-size:12px;line-height:18px;color:#e2e2e2;left:1116.5px;letter-spacing:-0.2px;">20</span>
<span style="top:662.5px;font-size:12px;line-height:18px;color:#e2e2e2;left:1195.5px;letter-spacing:-0.2px;">30</span>
<span style="top:662.5px;font-size:12px;line-height:18px;color:#e2e2e2;left:1273.5px;letter-spacing:-0.2px;">40</span>
<span style="top:662.5px;font-size:12px;line-height:18px;color:#e2e2e2;left:1351.5px;letter-spacing:-0.2px;">50</span>
<span style="top:662.5px;font-size:12px;line-height:18px;color:#e2e2e2;left:1429.5px;letter-spacing:-0.2px;">60</span>
<span style="top:662.5px;font-size:12px;line-height:18px;color:#e2e2e2;left:1507.5px;letter-spacing:-0.2px;">70</span>
<span style="top:662.5px;font-size:12px;line-height:18px;color:#e2e2e2;left:1585.5px;letter-spacing:-0.2px;">80</span>
<span style="top:662.5px;font-size:12px;line-height:18px;color:#e2e2e2;left:1664.5px;letter-spacing:-0.2px;">90</span>
<span style="top:662.5px;font-size:12px;line-height:18px;color:#e2e2e2;left:1739.3px;letter-spacing:-0.2px;">100</span>
<span style="top:662.5px;font-size:12px;line-height:18px;color:#e2e2e2;left:1817.7px;letter-spacing:-0.2px;">110</span>
<span style="top:662.5px;font-size:12px;line-height:18px;color:#e2e2e2;left:1895.3px;letter-spacing:-0.2px;">120</span>
<div style="left:964px;top:687px;width:947px;height:16px;background:#464646;"></div>
<div style="left:963px;top:686px;width:5px;height:18px;background:#7dc8af;border-radius:1px;"></div>
<div style="left:1905px;top:686px;width:5px;height:18px;background:#7dc8af;border-radius:1px;"></div>
<div style="left:960px;top:704px;width:8px;height:22px;background:#2f2f2f;"></div>
<div style="left:968px;top:706.5px;width:946px;height:18px;background:#b991ff;border-radius:3px 0 0 3px;"></div>
<div style="left:1905px;top:706.5px;width:9px;height:18px;background:#8269b4;"></div>
<span style="top:706.6px;font-size:12px;line-height:18px;color:#fff;letter-spacing:0.246px;left:976px;">Main</span>
<div style="left:968px;top:728.5px;width:946px;height:18px;background:#b991ff;border-radius:3px 0 0 3px;"></div>
<div style="left:1905px;top:728.5px;width:9px;height:18px;background:#8269b4;"></div>
<span style="top:728.6px;font-size:12px;line-height:18px;color:#fff;letter-spacing:-0.015px;left:976px;">Cavalry Typing Text</span>
<div style="left:968px;top:750.5px;width:946px;height:18px;background:#b991ff;border-radius:3px 0 0 3px;"></div>
<div style="left:1905px;top:750.5px;width:9px;height:18px;background:#8269b4;"></div>
<span style="top:750.6px;font-size:12px;line-height:18px;color:#fff;letter-spacing:0.164px;left:976px;">Cursor</span>
<div style="left:1889.2px;top:682px;width:1.3px;height:280px;background:#7dc8af;"></div>
<svg style="left:1882px;top:676px" width="16" height="11" viewBox="0 0 16 11"><path d="M0 0.5h15.5l-7.75 9.5z" fill="#7dc8af"/></svg>
<div style="left:960px;top:962px;width:953px;height:14px;background:#2a2a2a;"></div>
<div style="left:988px;top:964px;width:839px;height:10px;background:#4e4e4e;border-radius:5px;"></div>
<div style="left:959px;top:976px;width:955px;height:22px;background:#444;"></div>
<div style="left:961px;top:978px;width:19px;height:19px;background:#262626;border-radius:3px;border:1px solid #444;box-sizing:border-box;"></div>
<div style="left:983px;top:979px;width:150px;height:17px;background:#262626;border-radius:2px;"></div>
<span style="top:978.7px;font-size:12px;line-height:18px;color:#e2e2e2;letter-spacing:-0.139px;left:986px;">Default Keyframe Layer</span>
<div style="left:1140px;top:979px;width:68px;height:17px;background:#262626;border-radius:2px;"></div>
<span style="top:979.7px;font-size:11px;line-height:16px;color:#555;left:1145px;">F</span>
<span style="top:978.7px;font-size:12px;line-height:18px;color:#e2e2e2;left:1157px;">-</span>
<span style="top:978.7px;font-size:12px;line-height:18px;color:#e2e2e2;letter-spacing:-0.005px;left:1215px;">Align:</span>
<div style="left:1252px;top:978px;width:52px;height:19px;background:#262626;border-radius:3px;border:1px solid #555;box-sizing:border-box;"></div>
<div style="left:1308px;top:978px;width:19px;height:19px;background:#262626;border-radius:3px;border:1px solid #555;box-sizing:border-box;"></div>
<div style="left:1329px;top:978px;width:32px;height:19px;background:#262626;border-radius:3px;border:1px solid #555;box-sizing:border-box;"></div>
<div style="left:1364px;top:978px;width:32px;height:19px;background:#262626;border-radius:3px;border:1px solid #555;box-sizing:border-box;"></div>
<div style="left:1762px;top:985px;width:118px;height:4px;background:#555;border-radius:2px;"></div>
<div style="left:1762px;top:985px;width:62px;height:4px;background:#e0e0e0;border-radius:2px;"></div>
<div style="left:1819px;top:982px;width:10px;height:10px;background:#6fcfb0;border-radius:5px;border:1px solid #4a9a80;box-sizing:border-box;"></div>
<div style="left:494px;top:1004px;width:1420px;height:22px;background:#383838;"></div>
<div style="left:498px;top:1010px;width:2px;height:2px;background:#969696;"></div>
<div style="left:498px;top:1014px;width:2px;height:2px;background:#969696;"></div>
<div style="left:498px;top:1018px;width:2px;height:2px;background:#969696;"></div>
<div style="left:508px;top:1007px;width:17px;height:17px;background:#262626;border-radius:3px;border:1px solid #444;box-sizing:border-box;"></div>
<div style="left:528px;top:1008px;width:18px;height:14px;background:#d9737d;border-radius:2px;"></div>
<span style="top:1007.3px;font-size:11px;line-height:16px;color:#3c141e;left:533.9px;">6</span>
<div style="left:554px;top:1012px;width:6px;height:6px;background:#d9737d;border-radius:3px;"></div>
<span style="top:1006.8px;font-size:12px;line-height:18px;color:#e2e2e2;letter-spacing:-0.232px;left:565px;">Save reminder: 152 minutes since your last save.</span>
<span style="top:1006.3px;font-size:12px;line-height:18px;color:#e2e2e2;font-style:italic;letter-spacing:-0.762px;left:1360px;">Click to see next message</span>
<div style="left:1488px;top:1006px;width:80px;height:19px;background:#d4bc64;border-radius:2px;"></div>
<span style="top:1006.6px;font-size:12px;line-height:18px;color:#1c1c1c;letter-spacing:-0.338px;left:1493px;">Feedback</span>
<div style="left:1571px;top:1006px;width:109px;height:19px;background:#2fcc71;border-radius:2px;"></div>
<span style="top:1006.6px;font-size:12px;line-height:18px;color:#1c1c1c;letter-spacing:-0.171px;left:1576px;">Upgrade to Pro</span>
<div style="left:1683px;top:1006px;width:119px;height:19px;background:#b58cff;border-radius:2px;"></div>
<span style="top:1006.6px;font-size:12px;line-height:18px;color:#1c1c1c;letter-spacing:-0.054px;left:1688px;">Update Available</span>
<div style="left:1805px;top:1006px;width:106px;height:19px;background:#3fb0ea;border-radius:2px;"></div>
<span style="top:1006.6px;font-size:12px;line-height:18px;color:#1c1c1c;letter-spacing:-0.217px;left:1810px;">Tips and Tricks</span>
<svg width="0" height="0" style="left:0;top:0"><defs><linearGradient id="lg" x1="0" y1="0" x2="0" y2="1"><stop offset="0" stop-color="#f2f2f2"/><stop offset="1" stop-color="#bdbdbd"/></linearGradient></defs></svg>
<svg style="left:502px;top:98px" width="16" height="22" viewBox="0 0 16 22"><path d="M2.5 1.5 L2.5 16.5 L6.3 13.2 L9.2 20 L11.8 18.9 L8.9 12.3 L13.8 12 Z" fill="none" stroke="#2fcc71" stroke-width="1.5" stroke-linejoin="miter"/></svg>
<svg style="left:502px;top:129px" width="18" height="22" viewBox="0 0 18 22"><path d="M1.8 0.7 L16.2 14.4 L7.3 15.5 L1.8 21.2 Z" fill="url(#lg)"/></svg>
<svg style="left:499px;top:160px" width="20" height="20" viewBox="0 0 20 20"><g transform="rotate(-38 10 10)"><path d="M10 -1 C6 3 5 8 6.5 13 L13.5 13 C15 8 14 3 10 -1 Z" fill="url(#lg)"/><path d="M10 0 L10 8" stroke="#464646" stroke-width="1"/><circle cx="10" cy="8.5" r="1.3" fill="#464646"/><rect x="6" y="14.2" width="8" height="3.2" fill="url(#lg)"/></g></svg>
<svg style="left:497px;top:188px" width="24" height="24" viewBox="0 0 24 24"><g transform="rotate(45 12 12)"><rect x="9.6" y="-0.5" width="4.8" height="3.4" rx="1.6" fill="url(#lg)"/><rect x="9.6" y="3.8" width="4.8" height="15" fill="url(#lg)"/><path d="M9.9 19.8 L14.1 19.8 L12 23.2 Z" fill="url(#lg)"/><path d="M11.3 23.6 L12.7 23.6 L12 25 Z" fill="url(#lg)"/></g></svg>
<svg style="left:498px;top:221px" width="22" height="16" viewBox="0 0 22 16"><rect x="1" y="3.5" width="13.5" height="11" rx="1.5" fill="url(#lg)"/><path d="M15.5 8.5 L21 4.5 L21 13.8 L15.5 10 Z" fill="url(#lg)"/><rect x="4" y="1" width="7" height="1.5" fill="url(#lg)"/><circle cx="4.5" cy="7" r="1.3" fill="#464646"/></svg>
<svg style="left:499px;top:250px" width="20" height="20" viewBox="0 0 20 20"><path d="M2 18.5 L18 2" stroke="#dcdcdc" stroke-width="1.3"/></svg>
<svg style="left:501px;top:282px" width="16" height="16" viewBox="0 0 16 16"><path d="M1 0.5 H15 V4 H10 V15.5 H6 V4 H1 Z" fill="url(#lg)"/></svg>
<svg style="left:500px;top:310px" width="20" height="20" viewBox="0 0 20 20"><path d="M1.2 1.7 L8.9 8.6 L4.5 9.5 L1.2 13.3 Z" fill="url(#lg)"/><rect x="12.8" y="1.3" width="2.2" height="2.2" fill="#f0f0f0"/><rect x="16" y="16.6" width="2.2" height="2.2" fill="#f0f0f0"/><rect x="0.2" y="16.6" width="2.2" height="2.2" fill="#f0f0f0"/><path d="M6.5 2.6 L12 2.3 M14.6 4.5 L16.8 16 M3.2 17.7 L15.4 17.7" stroke="#d8d8d8" stroke-width="1" fill="none"/></svg>
<svg style="left:501px;top:342px" width="16" height="16" viewBox="0 0 16 16"><rect x="0.5" y="0.5" width="15" height="15" fill="url(#lg)"/></svg>
<svg style="left:500px;top:371px" width="18" height="18" viewBox="0 0 18 18"><circle cx="9" cy="9" r="8.5" fill="url(#lg)"/></svg>
<svg style="left:500px;top:400px" width="18" height="18" viewBox="0 0 18 18"><path d="M9 0.5 L17.6 6.8 L14.3 17 L3.7 17 L0.4 6.8 Z" fill="url(#lg)"/></svg>
<svg style="left:499px;top:430px" width="20" height="20" viewBox="0 0 20 20"><path d="M10.00 0.50 L12.35 7.26 L19.51 7.41 L13.80 11.74 L15.88 18.59 L10.00 14.50 L4.12 18.59 L6.20 11.74 L0.49 7.41 L7.65 7.26 Z" fill="url(#lg)"/></svg>
<svg style="left:499px;top:460px" width="20" height="20" viewBox="0 0 20 20"><path d="M6.5 17.2 A7 7 0 1 1 16.6 7.5" fill="none" stroke="#dcdcdc" stroke-width="3"/></svg>
<svg style="left:499px;top:490px" width="20" height="20" viewBox="0 0 20 20"><path d="M10 0.5 C10.8 6 13.5 9 19.5 10 C13.5 11 10.8 14 10 19.5 C9.2 14 6.5 11 0.5 10 C6.5 9 9.2 6 10 0.5 Z" fill="url(#lg)"/></svg>
<svg style="left:499px;top:520px" width="20" height="20" viewBox="0 0 20 20"><path d="M18.80 8.13 L18.80 11.87 L16.39 11.65 L15.69 13.35 L17.55 14.90 L14.90 17.55 L13.35 15.69 L11.65 16.39 L11.87 18.80 L8.13 18.80 L8.35 16.39 L6.65 15.69 L5.10 17.55 L2.45 14.90 L4.31 13.35 L3.61 11.65 L1.20 11.87 L1.20 8.13 L3.61 8.35 L4.31 6.65 L2.45 5.10 L5.10 2.45 L6.65 4.31 L8.35 3.61 L8.13 1.20 L11.87 1.20 L11.65 3.61 L13.35 4.31 L14.90 2.45 L17.55 5.10 L15.69 6.65 L16.39 8.35 Z M13 10 A3 3 0 1 0 7 10 A3 3 0 1 0 13 10 Z" fill="url(#lg)" fill-rule="evenodd"/></svg>
<svg style="left:497px;top:553px" width="24" height="14" viewBox="0 0 24 14"><path d="M0.5 7 L7.5 1 L7.5 5 L16.5 5 L16.5 1 L23.5 7 L16.5 13 L16.5 9 L7.5 9 L7.5 13 Z" fill="url(#lg)"/></svg>
<svg style="left:498px;top:585px" width="22" height="10" viewBox="0 0 22 10"><rect x="0.5" y="0.5" width="21" height="9" rx="4.5" fill="url(#lg)"/></svg>
<svg style="left:168px;top:58px" width="12" height="12" viewBox="0 0 12 12"><rect x="0" y="0" width="2" height="2" fill="#2fcc71"/><rect x="0" y="10" width="2" height="2" fill="#2fcc71"/><rect x="10" y="0" width="2" height="2" fill="#2fcc71"/><rect x="10" y="10" width="2" height="2" fill="#2fcc71"/><rect x="1.5" y="1.5" width="5.5" height="5.5" fill="#2fcc71"/><rect x="5" y="5.5" width="5.5" height="5" fill="#2fcc71"/><rect x="3.5" y="7" width="3" height="2" fill="#2fcc71"/></svg>
<svg style="left:229px;top:58px" width="12" height="12" viewBox="0 0 12 12"><rect x="0" y="0" width="2" height="2" fill="#d0d0d0"/><rect x="0" y="10" width="2" height="2" fill="#d0d0d0"/><rect x="10" y="0" width="2" height="2" fill="#d0d0d0"/><rect x="10" y="10" width="2" height="2" fill="#d0d0d0"/><rect x="3" y="3" width="6" height="6" fill="#cfcfcf"/></svg>
<svg style="left:380px;top:56px" width="16" height="16" viewBox="0 0 16 16"><path d="M3 8.5 L6.5 12 L13.5 3.5" fill="none" stroke="#2fcc71" stroke-width="2"/></svg>
<svg style="left:518px;top:56px" width="16" height="16" viewBox="0 0 16 16"><path d="M3 8.5 L6.5 12 L13.5 3.5" fill="none" stroke="#2fcc71" stroke-width="2"/></svg>
<svg style="left:980px;top:57px" width="16" height="16" viewBox="0 0 16 16"><path d="M9.50 4.50 L10.49 8.51 L14.50 9.50 L10.49 10.49 L9.50 14.50 L8.51 10.49 L4.50 9.50 L8.51 8.51 Z" fill="#dcdcdc"/><circle cx="3" cy="3" r="1.2" fill="#dcdcdc"/><circle cx="9" cy="2.5" r="1.1" fill="#dcdcdc"/><circle cx="3" cy="9" r="1.1" fill="#dcdcdc"/><path d="M13 16 L16 16 L16 13 Z" fill="#6fcfb0"/></svg>
<svg style="left:1088px;top:56px" width="10" height="16" viewBox="0 0 10 16"><path d="M6.5 0.5 L1 9 L4.6 9 L3 15.5 L9 6.5 L5.2 6.5 Z" fill="#6fcfb0"/></svg>
<svg style="left:1372.3px;top:50.6px" width="27" height="27" viewBox="0 0 27 27"><circle cx="6.0" cy="5.800000000000001" r="1.6" fill="#e8d96a"/><circle cx="6.0" cy="13.3" r="1.6" fill="#e8d96a"/><circle cx="6.0" cy="20.8" r="1.6" fill="#e8d96a"/><circle cx="13.5" cy="5.800000000000001" r="1.6" fill="#e8d96a"/><circle cx="13.5" cy="13.3" r="1.6" fill="#e8d96a"/><circle cx="13.5" cy="20.8" r="1.6" fill="#e8d96a"/><circle cx="21.0" cy="5.800000000000001" r="1.6" fill="#e8d96a"/><circle cx="21.0" cy="13.3" r="1.6" fill="#e8d96a"/><circle cx="21.0" cy="20.8" r="1.6" fill="#e8d96a"/></svg>
<svg style="left:1401.3px;top:50.6px" width="27" height="27" viewBox="0 0 27 27"><path d="M5.5 9 L10 4.5 L23 4.5 L23 17.5 L19 22 L19 9 Z" fill="#cfcfcf"/><path d="M5.5 9 L10 4.5 L23 4.5 L19 9 Z" fill="#ececec"/><rect x="5.5" y="9" width="13.5" height="13" fill="#e8d96a"/></svg>
<svg style="left:1432.3px;top:50.6px" width="27" height="27" viewBox="0 0 27 27"><rect x="3.5" y="3.5" width="20" height="19.5" rx="5.5" fill="none" stroke="#e6e6e6" stroke-width="1.1"/><rect x="8.5" y="7" width="3" height="13" fill="#e8d96a"/><rect x="13" y="7" width="6" height="3.5" fill="#e8d96a"/><rect x="13" y="12" width="3.5" height="3.5" fill="#e8d96a"/></svg>
<svg style="left:1462.3px;top:50.6px" width="27" height="27" viewBox="0 0 27 27"><circle cx="6.5" cy="6.5" r="1.6" fill="#e8d96a"/><circle cx="17.5" cy="5.5" r="1.6" fill="#ccc"/><circle cx="11.5" cy="9.5" r="1.5" fill="#ccc"/><circle cx="20.5" cy="13.5" r="2.6" fill="#e8d96a"/><circle cx="12.5" cy="16.5" r="2.7" fill="#ccc"/><circle cx="5.5" cy="17.5" r="1.6" fill="#e8d96a"/><circle cx="18.5" cy="21.5" r="1.6" fill="#e8d96a"/></svg>
<svg style="left:1497.3px;top:50.6px" width="27" height="27" viewBox="0 0 27 27"><path d="M3.5 13.5 H6 M8.5 13.5 H11.5 M13.5 13.5 H22.5" stroke="#8fdc9a" stroke-width="1.8" fill="none"/><path d="M16.5 7.5 L22.8 13.5 L16.5 19.5" stroke="#8fdc9a" stroke-width="1.8" fill="none"/></svg>
<svg style="left:1527.3px;top:50.6px" width="27" height="27" viewBox="0 0 27 27"><rect x="4.5" y="3.5" width="1.2" height="20" fill="#e0e0e0"/><rect x="8.5" y="7.5" width="9" height="5" fill="#98dba0"/><rect x="8.5" y="14.5" width="14" height="5" fill="#98dba0"/></svg>
<svg style="left:1562.3px;top:50.6px" width="27" height="27" viewBox="0 0 27 27"><rect x="10.5" y="2.5" width="6" height="22" rx="3" fill="#4c4c4c"/><rect x="2.5" y="10.5" width="22" height="6" rx="3" fill="#4c4c4c"/><circle cx="13.5" cy="13.5" r="2.1" fill="#9bcdf5"/><circle cx="5.5" cy="13.5" r="2.1" fill="#9bcdf5"/><circle cx="21.5" cy="13.5" r="2.1" fill="#9bcdf5"/><circle cx="13.5" cy="5.5" r="2.1" fill="#9bcdf5"/><circle cx="13.5" cy="21.5" r="2.1" fill="#9bcdf5"/></svg>
<svg style="left:1592.3px;top:50.6px" width="27" height="27" viewBox="0 0 27 27"><rect x="2.5" y="10.5" width="22" height="6" rx="3" fill="#4c4c4c"/><circle cx="5.5" cy="13.5" r="2.1" fill="#9bcdf5"/><circle cx="13.5" cy="13.5" r="2.1" fill="#9bcdf5"/><circle cx="21.5" cy="13.5" r="2.1" fill="#9bcdf5"/></svg>
<svg style="left:1622.3px;top:50.6px" width="27" height="27" viewBox="0 0 27 27"><path d="M16.5 6.5 A7.2 7.2 0 0 0 16.5 20.5" fill="none" stroke="#e0e0e0" stroke-width="1.7"/><path d="M14 6.5 H19 M16.5 4 V9 M14 20.5 H19 M16.5 18 V23" stroke="#7fcf90" stroke-width="1.3"/></svg>
<svg style="left:1652.3px;top:50.6px" width="27" height="27" viewBox="0 0 27 27"><rect x="3.5" y="8" width="20" height="1" fill="#e0e0e0"/><rect x="3.5" y="18.5" width="20" height="1" fill="#e0e0e0"/><rect x="3.5" y="10.5" width="4" height="6" fill="#e8d96a"/><rect x="9" y="10.5" width="9" height="6" fill="#e8d96a"/><rect x="19.5" y="10.5" width="4" height="6" fill="#e8d96a"/></svg>
<svg style="left:1687.3px;top:50.6px" width="27" height="27" viewBox="0 0 27 27"><g transform="rotate(-17 13 12)"><rect x="5" y="4" width="13" height="3.3" fill="#e8d96a"/><rect x="10" y="4" width="3.3" height="15" fill="#e8d96a"/></g><path d="M4 20.5 C8 25 11 21 15 20 S20 22 23.5 24" fill="none" stroke="#d8d8d8" stroke-width="1.1"/></svg>
<svg style="left:1722.3px;top:50.6px" width="27" height="27" viewBox="0 0 27 27"><rect x="3.5" y="4.5" width="20" height="2" fill="#a9d4f7"/><rect x="3.5" y="8.5" width="4" height="3.5" fill="#d0d0d0"/><rect x="8.5" y="13.5" width="9" height="3.5" fill="#d0d0d0"/><rect x="18.5" y="18.5" width="5" height="3.5" fill="#d0d0d0"/></svg>
<svg style="left:1752.3px;top:50.6px" width="27" height="27" viewBox="0 0 27 27"><rect x="3.5" y="4.5" width="20" height="2" fill="#a9d4f7"/><rect x="3.5" y="8.5" width="12" height="3.5" fill="#d0d0d0"/><rect x="7.5" y="13.5" width="12" height="3.5" fill="#d0d0d0"/><rect x="12.5" y="18.5" width="11" height="3.5" fill="#d0d0d0"/></svg>
<svg style="left:1787.3px;top:50.6px" width="27" height="27" viewBox="0 0 27 27"><rect x="2.5" y="5.5" width="22" height="15.5" fill="none" stroke="#e6e6e6" stroke-width="1"/><rect x="5.2" y="8" width="4.6" height="10.5" fill="#e8d96a"/><rect x="11.2" y="8" width="4.6" height="10.5" fill="#e8d96a"/><rect x="17.2" y="8" width="4.6" height="10.5" fill="#e8d96a"/></svg>
<svg style="left:1817.3px;top:50.6px" width="27" height="27" viewBox="0 0 27 27"><rect x="2.5" y="5.5" width="22" height="15.5" fill="none" stroke="#e6e6e6" stroke-width="1"/><rect x="5" y="8" width="17" height="4.3" fill="#e8d96a"/><rect x="5" y="14" width="17" height="4.3" fill="#e8d96a"/></svg>
<svg style="left:1847.3px;top:50.6px" width="27" height="27" viewBox="0 0 27 27"><rect x="2.5" y="5.5" width="22" height="15.5" fill="none" stroke="#e6e6e6" stroke-width="1"/><rect x="5" y="8" width="7.6" height="4.3" fill="#e8d96a"/><rect x="5" y="14" width="7.6" height="4.3" fill="#e8d96a"/><rect x="14.4" y="8" width="7.6" height="4.3" fill="#e8d96a"/><rect x="14.4" y="14" width="7.6" height="4.3" fill="#e8d96a"/></svg>
<svg style="left:1882.3px;top:50.6px" width="27" height="27" viewBox="0 0 27 27"><rect x="3.5" y="8.5" width="13.5" height="10.5" rx="1.5" fill="#cfcfcf"/><path d="M18 13 L23.5 8.5 L23.5 18.5 L18 14.5 Z" fill="#cfcfcf"/><rect x="6" y="6" width="7" height="1.5" fill="#cfcfcf"/><circle cx="7" cy="12" r="1.2" fill="#2b2b2b"/></svg>
<div style="left:1492.5px;top:63px;width:2px;height:2px;background:#252525;border-radius:1px;"></div>
<div style="left:1557.5px;top:63px;width:2px;height:2px;background:#252525;border-radius:1px;"></div>
<div style="left:1682.5px;top:63px;width:2px;height:2px;background:#252525;border-radius:1px;"></div>
<div style="left:1717.5px;top:63px;width:2px;height:2px;background:#252525;border-radius:1px;"></div>
<div style="left:1782.5px;top:63px;width:2px;height:2px;background:#252525;border-radius:1px;"></div>
<div style="left:1877.5px;top:63px;width:2px;height:2px;background:#252525;border-radius:1px;"></div>
<div style="left:1076px;top:63px;width:2px;height:2px;background:#252525;border-radius:1px;"></div>
<svg style="left:12px;top:113px" width="16" height="16" viewBox="0 0 16 16"><circle cx="6" cy="6" r="4.5" fill="none" stroke="#e6e6e6" stroke-width="0.9"/><path d="M9.2 9.2 L10.5 10.500" stroke="#e6e6e6" stroke-width="1"/><path d="M10.800 10.800 L12.600 12.600" stroke="#e6e6e6" stroke-width="2" stroke-linecap="round"/></svg>
<svg style="left:11px;top:385px" width="16" height="16" viewBox="0 0 16 16"><circle cx="6" cy="6" r="4.5" fill="none" stroke="#e6e6e6" stroke-width="0.9"/><path d="M9.2 9.2 L10.5 10.500" stroke="#e6e6e6" stroke-width="1"/><path d="M10.800 10.800 L12.600 12.600" stroke="#e6e6e6" stroke-width="2" stroke-linecap="round"/></svg>
<svg style="left:500px;top:668px" width="16" height="16" viewBox="0 0 16 16"><circle cx="6" cy="6" r="4.5" fill="none" stroke="#e6e6e6" stroke-width="0.9"/><path d="M9.2 9.2 L10.5 10.500" stroke="#e6e6e6" stroke-width="1"/><path d="M10.800 10.800 L12.600 12.600" stroke="#e6e6e6" stroke-width="2" stroke-linecap="round"/></svg>
<svg style="left:469.0px;top:117.0px" width="10" height="6.0" viewBox="0 0 10 6.0"><path d="M1 1 L5.0 4.5 L9 1" fill="none" stroke="#c8c8c8" stroke-width="1.1"/></svg>
<svg style="left:218.0px;top:338.0px" width="10" height="6.0" viewBox="0 0 10 6.0"><path d="M1 1 L5.0 4.5 L9 1" fill="none" stroke="#c8c8c8" stroke-width="1.1"/></svg>
<svg style="left:14.0px;top:417.5px" width="10" height="6.0" viewBox="0 0 10 6.0"><path d="M1 1 L5.0 4.5 L9 1" fill="none" stroke="#c8c8c8" stroke-width="1.1"/></svg>
<svg style="left:357.0px;top:598.0px" width="10" height="6.0" viewBox="0 0 10 6.0"><path d="M1 1 L5.0 4.5 L9 1" fill="none" stroke="#c8c8c8" stroke-width="1.1"/></svg>
<svg style="left:357.0px;top:664.0px" width="10" height="6.0" viewBox="0 0 10 6.0"><path d="M1 1 L5.0 4.5 L9 1" fill="none" stroke="#c8c8c8" stroke-width="1.1"/></svg>
<svg style="left:353.0px;top:779.0px" width="10" height="6.0" viewBox="0 0 10 6.0"><path d="M1 1 L5.0 4.5 L9 1" fill="none" stroke="#c8c8c8" stroke-width="1.1"/></svg>
<svg style="left:457.0px;top:779.0px" width="10" height="6.0" viewBox="0 0 10 6.0"><path d="M1 1 L5.0 4.5 L9 1" fill="none" stroke="#c8c8c8" stroke-width="1.1"/></svg>
<svg style="left:599.0px;top:599.0px" width="10" height="6.0" viewBox="0 0 10 6.0"><path d="M1 1 L5.0 4.5 L9 1" fill="none" stroke="#c8c8c8" stroke-width="1.1"/></svg>
<svg style="left:1635.0px;top:366.0px" width="10" height="6.0" viewBox="0 0 10 6.0"><path d="M1 1 L5.0 4.5 L9 1" fill="none" stroke="#c8c8c8" stroke-width="1.1"/></svg>
<svg style="left:1859.0px;top:458.0px" width="10" height="6.0" viewBox="0 0 10 6.0"><path d="M1 1 L5.0 4.5 L9 1" fill="none" stroke="#c8c8c8" stroke-width="1.1"/></svg>
<svg style="left:613.5px;top:714.25px" width="9" height="5.5" viewBox="0 0 9 5.5"><path d="M1 1 L4.5 4.0 L8 1" fill="none" stroke="#999" stroke-width="1.1"/></svg>
<svg style="left:632.5px;top:736.25px" width="9" height="5.5" viewBox="0 0 9 5.5"><path d="M1 1 L4.5 4.0 L8 1" fill="none" stroke="#999" stroke-width="1.1"/></svg>
<svg style="left:13px;top:135px" width="14" height="14" viewBox="0 0 14 14"><path d="M2 12 L2.6 9.8 L7.6 4.8 L9.2 6.4 L4.2 11.4 Z" fill="none" stroke="#c8c8c8" stroke-width="1"/><path d="M7.5 3.5 L10.5 6.5" stroke="#c8c8c8" stroke-width="2.2"/><circle cx="10.6" cy="3.4" r="2" fill="#c8c8c8"/></svg>
<svg style="left:1875px;top:337px" width="14" height="14" viewBox="0 0 14 14"><path d="M2 12 L2.6 9.8 L7.6 4.8 L9.2 6.4 L4.2 11.4 Z" fill="none" stroke="#e0e0e0" stroke-width="1"/><path d="M7.5 3.5 L10.5 6.5" stroke="#e0e0e0" stroke-width="2.2"/><circle cx="10.6" cy="3.4" r="2" fill="#e0e0e0"/></svg>
<svg style="left:574px;top:689px" width="14" height="14" viewBox="0 0 14 14"><path d="M2 12 L2.6 9.8 L7.6 4.8 L9.2 6.4 L4.2 11.4 Z" fill="none" stroke="#c8c8c8" stroke-width="1"/><path d="M7.5 3.5 L10.5 6.5" stroke="#c8c8c8" stroke-width="2.2"/><circle cx="10.6" cy="3.4" r="2" fill="#c8c8c8"/></svg>
<svg style="left:53px;top:156px" width="14" height="12" viewBox="0 0 14 12"><rect x="0.5" y="0.5" width="13" height="11" fill="none" stroke="#cfcfcf" stroke-width="1"/><rect x="0.5" y="8.5" width="13" height="3" fill="#cfcfcf"/></svg>
<svg style="left:53px;top:178px" width="14" height="12" viewBox="0 0 14 12"><rect x="0.5" y="0.5" width="13" height="11" fill="none" stroke="#cfcfcf" stroke-width="1"/><rect x="0.5" y="8.5" width="13" height="3" fill="#cfcfcf"/></svg>
<svg style="left:53px;top:200px" width="14" height="12" viewBox="0 0 14 12"><rect x="0.5" y="0.5" width="13" height="11" fill="none" stroke="#cfcfcf" stroke-width="1"/><rect x="0.5" y="8.5" width="13" height="3" fill="#cfcfcf"/></svg>
<svg style="left:11px;top:333px" width="16" height="16" viewBox="0 0 16 16"><path d="M1.5 3.5 V2 H6.5 L7.5 3.5" fill="none" stroke="#d0d0d0"/><rect x="1.5" y="3.5" width="12" height="10" fill="#d0d0d0"/><rect x="3" y="6" width="2" height="1.5" fill="#2a2a2a"/><rect x="6" y="6" width="6" height="1.5" fill="#2a2a2a"/><rect x="3" y="9" width="2" height="1.5" fill="#2a2a2a"/><rect x="6" y="9" width="6" height="1.5" fill="#2a2a2a"/><path d="M12.5 16 L16 16 L16 12.5 Z" fill="#6fcfb0"/></svg>
<svg style="left:422px;top:334px" width="14" height="14" viewBox="0 0 14 14"><path d="M1 3.5 V2 H5.5 L7 3.5 H13 V12 H1 Z" fill="#cfcfcf"/></svg>
<svg style="left:445px;top:335px" width="14" height="12" viewBox="0 0 14 12"><rect x="0.5" y="0.5" width="13" height="11" fill="none" stroke="#cfcfcf" stroke-width="1"/><rect x="0.5" y="8.5" width="13" height="3" fill="#cfcfcf"/></svg>
<svg style="left:468px;top:334px" width="14" height="14" viewBox="0 0 14 14"><rect x="2" y="2.5" width="10" height="1.5" fill="#cfcfcf"/><rect x="5" y="1" width="4" height="1.5" fill="#cfcfcf"/><path d="M3 5 H11 L10.3 13 H3.7 Z" fill="#cfcfcf"/><path d="M5.5 6.5 V11.5 M8.5 6.5 V11.5" stroke="#2a2a2a" stroke-width="1"/></svg>
<svg style="left:422px;top:384px" width="16" height="16" viewBox="0 0 16 16"><circle cx="6.5" cy="6.5" r="4.8" fill="none" stroke="#b8b8b8" stroke-width="1"/><circle cx="6.5" cy="6.5" r="2.2" fill="none" stroke="#b8b8b8" stroke-width="1"/><path d="M7.5 7.5 L14 10 L11.4 11.2 L13.8 14.2 L12.8 15 L10.4 12 L8.8 14 Z" fill="#d8d8d8"/></svg>
<svg style="left:445px;top:384px" width="16" height="16" viewBox="0 0 16 16"><rect x="1.5" y="3" width="8" height="2" fill="#e0e0e0"/><rect x="3.5" y="7" width="8.5" height="2" fill="#e0e0e0"/><rect x="5.5" y="11" width="7" height="2" fill="#e0e0e0"/><path d="M10.5 3.5 H15 M12.8 1.2 V5.8" stroke="#e0e0e0" stroke-width="1.2"/></svg>
<svg style="left:467px;top:384px" width="18" height="16" viewBox="0 0 18 16"><path d="M1.5 8 L6 3 H16.5 V13 H6 Z" fill="#e0e0e0"/><path d="M8 5 L14 11 M14 5 L8 11" stroke="#2a2a2a" stroke-width="1.5"/></svg>
<svg style="left:65px;top:412px" width="16" height="16" viewBox="0 0 16 16"><rect x="1.5" y="1.5" width="13" height="13" fill="none" stroke="#d8d8d8" stroke-width="1"/><rect x="0" y="0" width="2" height="2" fill="#f0f0f0"/><rect x="0" y="14" width="2" height="2" fill="#f0f0f0"/><rect x="14" y="0" width="2" height="2" fill="#f0f0f0"/><rect x="14" y="14" width="2" height="2" fill="#f0f0f0"/><path d="M4.5 4.2 H11.5 V6.2 H9.1 V12 H6.9 V6.2 H4.5 Z" fill="#e8d96a"/></svg>
<svg style="left:647px;top:709px" width="16" height="16" viewBox="0 0 16 16"><rect x="1.5" y="1.5" width="13" height="13" fill="none" stroke="#d8d8d8" stroke-width="1"/><rect x="0" y="0" width="2" height="2" fill="#f0f0f0"/><rect x="0" y="14" width="2" height="2" fill="#f0f0f0"/><rect x="14" y="0" width="2" height="2" fill="#f0f0f0"/><rect x="14" y="14" width="2" height="2" fill="#f0f0f0"/><path d="M4.5 4.2 H11.5 V6.2 H9.1 V12 H6.9 V6.2 H4.5 Z" fill="#e8d96a"/></svg>
<svg style="left:666px;top:731px" width="16" height="16" viewBox="0 0 16 16"><rect x="1.5" y="1.5" width="13" height="13" fill="none" stroke="#d8d8d8" stroke-width="1"/><rect x="0" y="0" width="2" height="2" fill="#f0f0f0"/><rect x="0" y="14" width="2" height="2" fill="#f0f0f0"/><rect x="14" y="0" width="2" height="2" fill="#f0f0f0"/><rect x="14" y="14" width="2" height="2" fill="#f0f0f0"/><path d="M4.5 4.2 H11.5 V6.2 H9.1 V12 H6.9 V6.2 H4.5 Z" fill="#e8d96a"/></svg>
<svg style="left:685px;top:753px" width="16" height="16" viewBox="0 0 16 16"><rect x="1.5" y="1.5" width="13" height="13" fill="none" stroke="#d8d8d8" stroke-width="1"/><rect x="0" y="0" width="2" height="2" fill="#f0f0f0"/><rect x="0" y="14" width="2" height="2" fill="#f0f0f0"/><rect x="14" y="0" width="2" height="2" fill="#f0f0f0"/><rect x="14" y="14" width="2" height="2" fill="#f0f0f0"/><path d="M4.5 4.2 H11.5 V6.2 H9.1 V12 H6.9 V6.2 H4.5 Z" fill="#e8d96a"/></svg>
<div style="left:51px;top:416px;width:9px;height:9px;border-radius:5px;border:1px solid #8a8a8a;box-sizing:border-box;"></div>
<svg style="left:366px;top:412px" width="16" height="16" viewBox="0 0 16 16"><rect x="2.5" y="3.5" width="5" height="2" fill="#e0e0e0"/><rect x="2.5" y="10" width="5" height="2" fill="#e0e0e0"/><rect x="9" y="6.8" width="5" height="2" fill="#e0e0e0"/><path d="M8.2 4.5 V11 " stroke="#777" stroke-width="1"/><path d="M12.5 16 L16 16 L16 12.5 Z" fill="#6fcfb0"/></svg>
<svg style="left:386px;top:412px" width="21" height="16" viewBox="0 0 21 16"><rect x="10.0" y="0" width="1" height="16" fill="#3a3a3a"/><path d="M2.5 8.0 L5.5 5.0 H8.5 V11.0 H5.5 Z" fill="#858585"/><path d="M18.5 8.0 L15.5 5.0 H12.5 V11.0 H15.5 Z" fill="#cc5cf5"/></svg>
<svg style="left:411px;top:412px" width="16" height="16" viewBox="0 0 16 16"><path d="M5.5 2 H10.5 V3 H9.8 L10.3 7 C11.5 7.6 12 8.5 12 9.5 H4 C4 8.5 4.5 7.6 5.7 7 L6.2 3 H5.5 Z" fill="#d8d8d8"/><rect x="7.5" y="9.5" width="1" height="5" fill="#d8d8d8"/></svg>
<svg style="left:431px;top:412px" width="16" height="16" viewBox="0 0 16 16"><circle cx="4.5" cy="3.5" r="1.1" fill="#d0d0d0"/><circle cx="11" cy="4.5" r="1.1" fill="#d0d0d0"/><circle cx="4.5" cy="10" r="1.1" fill="#d0d0d0"/><path d="M10.00 6.80 L10.85 10.15 L14.20 11.00 L10.85 11.85 L10.00 15.20 L9.15 11.85 L5.80 11.00 L9.15 10.15 Z" fill="#e0e0e0"/><path d="M12.5 16 L16 16 L16 12.5 Z" fill="#6fcfb0"/></svg>
<svg style="left:451px;top:412px" width="16" height="16" viewBox="0 0 16 16"><path d="M4 4 L12 12 M12 4 L4 12" stroke="#d8d8d8" stroke-width="1.1"/></svg>
<svg style="left:246px;top:437px" width="12" height="12" viewBox="0 0 12 12"><rect x="0" y="0" width="12" height="12" rx="1.5" fill="#2c2c2c"/><path d="M1.5 10.5 L10.5 1.5" stroke="#b25450" stroke-width="1.2"/></svg>
<svg style="left:378px;top:500px" width="15" height="16" viewBox="0 0 15 16"><path d="M4.5 6.5 V5.5 A3 3 0 0 1 10.5 5.5 V6.5 M4.5 9.5 V10.5 A3 3 0 0 0 10.5 10.5 V9.5" fill="none" stroke="#d0d0d0" stroke-width="1.1"/></svg>
<div style="left:364px;top:577px;width:4px;height:4px;background:#4f9e86;border-radius:2px;"></div>
<svg style="left:180px;top:617px" width="12" height="12" viewBox="0 0 12 12"><rect x="0.5" y="1.5" width="10" height="0.8" fill="#b8b8b8"/><rect x="0.5" y="4.5" width="8" height="0.8" fill="#b8b8b8"/><rect x="0.5" y="7.5" width="10" height="0.8" fill="#b8b8b8"/><rect x="0.5" y="10.5" width="7" height="0.8" fill="#b8b8b8"/></svg>
<svg style="left:180px;top:639px" width="12" height="12" viewBox="0 0 12 12"><rect x="0.5" y="1.5" width="10" height="0.8" fill="#b8b8b8"/><rect x="0.5" y="4.5" width="8" height="0.8" fill="#b8b8b8"/><rect x="0.5" y="7.5" width="10" height="0.8" fill="#b8b8b8"/><rect x="0.5" y="10.5" width="7" height="0.8" fill="#b8b8b8"/></svg>
<svg style="left:273px;top:615px" width="16" height="16" viewBox="0 0 16 16"><path d="M8.0 3.5 V12.5 M3.5 8.0 H12.5" stroke="#f0f0f0" stroke-width="1.8"/><path d="M12.5 16 L16 16 L16 12.5 Z" fill="#6fcfb0"/></svg>
<svg style="left:273px;top:637px" width="16" height="16" viewBox="0 0 16 16"><path d="M8.0 3.5 V12.5 M3.5 8.0 H12.5" stroke="#f0f0f0" stroke-width="1.8"/><path d="M12.5 16 L16 16 L16 12.5 Z" fill="#6fcfb0"/></svg>
<svg style="left:398px;top:615px" width="16" height="16" viewBox="0 0 16 16"><path d="M3.5 2.5 V12.5 H13.5" fill="none" stroke="#b8b8b8" stroke-width="1"/><path d="M5 11 L11 5" stroke="#b8b8b8" stroke-width="1"/><path d="M2 4 L3.5 2 L5 4 M12 11 L14 12.5 L12 14" fill="none" stroke="#7fcf90" stroke-width="1"/></svg>
<svg style="left:416px;top:615px" width="16" height="16" viewBox="0 0 16 16"><path d="M2.5 8 C2.5 3 7.5 3 8 8 S13.5 13 13.5 8" fill="none" stroke="#7fcf90" stroke-width="1.3"/><circle cx="2.5" cy="8" r="1.3" fill="#2a2a2a" stroke="#ddd" stroke-width="0.8"/><circle cx="8" cy="8" r="1.3" fill="#2a2a2a" stroke="#ddd" stroke-width="0.8"/><circle cx="13.5" cy="8" r="1.3" fill="#2a2a2a" stroke="#ddd" stroke-width="0.8"/></svg>
<svg style="left:434px;top:615px" width="16" height="16" viewBox="0 0 16 16"><path d="M1.5 9 C3 2 4.5 2 6 8 S8.5 14 10 8 S12.5 3 14.5 10" fill="none" stroke="#7fcf90" stroke-width="1.3"/></svg>
<svg style="left:455px;top:615px" width="16" height="16" viewBox="0 0 16 16"><rect x="2.5" y="3.5" width="11" height="2.6" rx="1" fill="#7fdc8f"/><rect x="2.5" y="7.5" width="11" height="2" fill="#e0e0e0"/><rect x="2.5" y="11" width="11" height="2" fill="#e0e0e0"/></svg>
<div style="left:457px;top:639px;width:13px;height:13px;border:1px solid #e0e0e0;box-sizing:border-box;background:radial-gradient(circle,#f3a6ae 0,#b06870 35%,#4a3034 70%,#2e2628 100%)"></div>
<svg style="left:197px;top:687px" width="16" height="16" viewBox="0 0 16 16"><path d="M7 2.5 V12.5 M2 7.5 H12" stroke="#f0f0f0" stroke-width="1.7"/><path d="M12 16 L15 16 L15 13 Z" fill="#6fcfb0"/></svg>
<span style="top:683.0px;font-size:14px;line-height:21px;color:#e8e8e8;font-style:italic;font-family:'Liberation Serif',serif;left:280px;">O</span>
<svg style="left:359px;top:688px" width="14" height="14" viewBox="0 0 14 14"><path d="M3.2 5.8 A4.6 4.6 0 1 1 3.6 10.5" fill="none" stroke="#e0e0e0" stroke-width="1.2"/><path d="M0.8 5.2 L5.6 4.6 L3.8 8.6 Z" fill="#e0e0e0"/></svg>
<svg style="left:415px;top:688px" width="13" height="13" viewBox="0 0 13 13"><path d="M6.5 1.8 L11.5 11 H1.5 Z" fill="none" stroke="#e0e0e0" stroke-width="1.1"/></svg>
<span style="top:840.5px;font-size:11px;line-height:16px;color:#d8d8d8;left:181.5px;text-decoration:underline;">U</span>
<span style="top:840.5px;font-size:11px;line-height:16px;color:#d8d8d8;left:201.8px;text-decoration:line-through;">S</span>
<span style="top:840.5px;font-size:11px;line-height:16px;color:#d8d8d8;left:223px;">T</span>
<span style="top:842.5px;font-size:11px;line-height:16px;color:#d8d8d8;left:230px;">,</span>
<span style="top:840.5px;font-size:11px;line-height:16px;color:#d8d8d8;left:243px;">T</span>
<span style="top:838.0px;font-size:11px;line-height:16px;color:#d8d8d8;left:250px;">&#x27;</span>
<svg style="left:259px;top:840px" width="16" height="16" viewBox="0 0 16 16"><path d="M14.85 6.54 L14.85 9.46 L13.03 9.30 L12.48 10.64 L13.87 11.81 L11.81 13.87 L10.64 12.48 L9.30 13.03 L9.46 14.85 L6.54 14.85 L6.70 13.03 L5.36 12.48 L4.19 13.87 L2.13 11.81 L3.52 10.64 L2.97 9.30 L1.15 9.46 L1.15 6.54 L2.97 6.70 L3.52 5.36 L2.13 4.19 L4.19 2.13 L5.36 3.52 L6.70 2.97 L6.54 1.15 L9.46 1.15 L9.30 2.97 L10.64 3.52 L11.81 2.13 L13.87 4.19 L12.48 5.36 L13.03 6.70 Z M10.6 8 A2.6 2.6 0 1 0 5.4 8 A2.6 2.6 0 1 0 10.6 8 Z" fill="#f0f0f0" fill-rule="evenodd"/></svg>
<svg style="left:180px;top:864px" width="12" height="12" viewBox="0 0 12 12"><rect x="1" y="1.5" width="9" height="1.2" fill="#2fcc71"/><rect x="1" y="5.5" width="6" height="1.2" fill="#2fcc71"/><rect x="1" y="9.5" width="9" height="1.2" fill="#2fcc71"/></svg>
<svg style="left:199px;top:864px" width="12" height="12" viewBox="0 0 12 12"><rect x="1.5" y="1.5" width="9" height="1.2" fill="#e0e0e0"/><rect x="3.5" y="5.5" width="5" height="1.2" fill="#e0e0e0"/><rect x="1.5" y="9.5" width="9" height="1.2" fill="#e0e0e0"/></svg>
<svg style="left:219px;top:864px" width="12" height="12" viewBox="0 0 12 12"><rect x="2" y="1.5" width="9" height="1.2" fill="#e0e0e0"/><rect x="5" y="5.5" width="6" height="1.2" fill="#e0e0e0"/><rect x="2" y="9.5" width="9" height="1.2" fill="#e0e0e0"/></svg>
<svg style="left:237px;top:864px" width="12" height="12" viewBox="0 0 12 12"><rect x="0.5" y="1.5" width="10" height="1.2" fill="#e0e0e0"/><rect x="0.5" y="5.5" width="10" height="1.2" fill="#e0e0e0"/><rect x="0.5" y="9.5" width="10" height="1.2" fill="#e0e0e0"/></svg>
<svg style="left:179px;top:885px" width="14" height="14" viewBox="0 0 14 14"><rect x="1.5" y="1" width="11" height="1.2" fill="#2fcc71"/><path d="M7 13 V4 M3.8 7 L7 3.8 L10.2 7" fill="none" stroke="#2fcc71" stroke-width="1.2"/></svg>
<svg style="left:198px;top:885px" width="14" height="14" viewBox="0 0 14 14"><rect x="1.5" y="6.4" width="11" height="1.2" fill="#e0e0e0"/><path d="M7 0.5 V5 M5 3 L7 5 L9 3 M7 13.5 V9 M5 11 L7 9 L9 11" fill="none" stroke="#e0e0e0" stroke-width="1"/></svg>
<svg style="left:217px;top:885px" width="14" height="14" viewBox="0 0 14 14"><rect x="1.5" y="12" width="11" height="1.2" fill="#e0e0e0"/><path d="M7 1 V10 M3.8 7 L7 10.2 L10.2 7" fill="none" stroke="#e0e0e0" stroke-width="1.2"/></svg>
<svg style="left:236px;top:885px" width="14" height="14" viewBox="0 0 14 14"><rect x="1.5" y="12" width="11" height="1.2" fill="#e0e0e0"/><path d="M3 10.5 L7 1.5 L11 10.5 M4.6 7.3 H9.4" fill="none" stroke="#e0e0e0" stroke-width="1.1"/></svg>
<svg style="left:500px;top:690px" width="10" height="12" viewBox="0 0 10 12"><path d="M2.5 5 V3.5 A2.5 2.5 0 0 1 7.5 3.5 V5" fill="none" stroke="#d0d0d0" stroke-width="1.2"/><rect x="0.8" y="5" width="8.4" height="6" fill="#d0d0d0"/><rect x="4.2" y="7" width="1.6" height="2" fill="#464646"/></svg>
<svg style="left:517px;top:691.5px" width="14" height="9" viewBox="0 0 14 9"><path d="M0.6 4.5 C3 0.8 11 0.8 13.4 4.5 C11 8.2 3 8.2 0.6 4.5 Z" fill="none" stroke="#d0d0d0" stroke-width="1"/><circle cx="7" cy="4.5" r="2" fill="#d0d0d0"/></svg>
<svg style="left:536px;top:689px" width="14" height="15" viewBox="0 0 14 15"><path d="M7 1 L13 4 V11 L7 14 L1 11 V4 Z M1 4 L7 7 L13 4 M7 7 V14" fill="none" stroke="#d0d0d0" stroke-width="1"/></svg>
<svg style="left:555px;top:690px" width="15" height="12" viewBox="0 0 15 12"><path d="M0.5 4 H3.5 L7 1 V11 L3.5 8 H0.5 Z" fill="#d0d0d0"/><path d="M9 3.5 A3.5 3.5 0 0 1 9 8.5 M10.8 1.3 A6 6 0 0 1 10.8 10.7" fill="none" stroke="#d0d0d0" stroke-width="1.1"/></svg>
<svg style="left:593px;top:692px" width="14" height="8" viewBox="0 0 14 8"><path d="M0.5 4 L4 0.3 H13.5 V7.7 H4 Z" fill="#d0d0d0"/><circle cx="5" cy="4" r="1.4" fill="#464646"/></svg>
<svg style="left:517px;top:711.5px" width="14" height="9" viewBox="0 0 14 9"><path d="M0.6 4.5 C3 0.8 11 0.8 13.4 4.5 C11 8.2 3 8.2 0.6 4.5 Z" fill="none" stroke="#d0d0d0" stroke-width="1"/><circle cx="7" cy="4.5" r="2" fill="#d0d0d0"/></svg>
<svg style="left:593px;top:712px" width="14" height="8" viewBox="0 0 14 8"><path d="M0.5 4 L4 0.3 H13.5 V7.7 H4 Z" fill="#d0d0d0"/><circle cx="5" cy="4" r="1.4" fill="#383838"/></svg>
<svg style="left:593px;top:734px" width="14" height="8" viewBox="0 0 14 8"><path d="M0.5 4 L4 0.3 H13.5 V7.7 H4 Z" fill="#d0d0d0"/><circle cx="5" cy="4" r="1.4" fill="#383838"/></svg>
<svg style="left:593px;top:756px" width="14" height="8" viewBox="0 0 14 8"><path d="M0.5 4 L4 0.3 H13.5 V7.7 H4 Z" fill="#d0d0d0"/><circle cx="5" cy="4" r="1.4" fill="#383838"/></svg>
<svg style="left:747px;top:665px" width="19" height="19" viewBox="0 0 19 19"><path d="M9.5 3.5 V15.5 M3.5 9.5 H15.5" stroke="#f0f0f0" stroke-width="1.8"/><path d="M15.5 19 L19 19 L19 15.5 Z" fill="#6fcfb0"/></svg>
<div style="left:790px;top:665px;width:19px;height:20px;border-radius:5px;background:#404040;border:1px solid #2a2a2a;box-sizing:border-box"></div>
<svg style="left:790px;top:665px" width="19" height="20" viewBox="0 0 19 20"><circle cx="7" cy="13" r="4.5" fill="none" stroke="#5a5a5a" stroke-width="1"/><circle cx="8.5" cy="11.5" r="4.5" fill="none" stroke="#777" stroke-width="1"/><circle cx="10" cy="9.5" r="4.5" fill="#999"/><circle cx="12" cy="7" r="4.5" fill="#e0e0e0"/></svg>
<svg style="left:812px;top:665px" width="19" height="20" viewBox="0 0 19 20"><circle cx="5.5" cy="4.5" r="1.2" fill="#d0d0d0"/><circle cx="12.5" cy="5.5" r="1.2" fill="#d0d0d0"/><circle cx="5.5" cy="11" r="1.2" fill="#d0d0d0"/><path d="M11.50 7.90 L12.42 11.58 L16.10 12.50 L12.42 13.42 L11.50 17.10 L10.58 13.42 L6.90 12.50 L10.58 11.58 Z" fill="#e6e6e6"/><path d="M15.5 20 L19 20 L19 16.5 Z" fill="#6fcfb0"/></svg>
<svg style="left:834px;top:665px" width="19" height="20" viewBox="0 0 19 20"><path d="M2.5 5 H5.5 M10 5 H16.5 M2.5 10 H9 M13.5 10 H16.5 M2.5 15 H5.5 M10 15 H14" stroke="#d8d8d8" stroke-width="1"/><circle cx="7.8" cy="5" r="1.7" fill="none" stroke="#d8d8d8" stroke-width="1"/><circle cx="11.3" cy="10" r="1.7" fill="none" stroke="#d8d8d8" stroke-width="1"/><circle cx="7.8" cy="15" r="1.7" fill="none" stroke="#d8d8d8" stroke-width="1"/><path d="M15.5 20 L19 20 L19 16.5 Z" fill="#6fcfb0"/></svg>
<svg style="left:898px;top:708px" width="21" height="16" viewBox="0 0 21 16"><rect x="10.0" y="0" width="1" height="16" fill="#3a3a3a"/><path d="M2.5 8.0 L5.5 5.0 H8.5 V11.0 H5.5 Z" fill="#d8c46a"/><path d="M18.5 8.0 L15.5 5.0 H12.5 V11.0 H15.5 Z" fill="#858585"/></svg>
<svg style="left:898px;top:730px" width="21" height="16" viewBox="0 0 21 16"><rect x="10.0" y="0" width="1" height="16" fill="#3a3a3a"/><path d="M2.5 8.0 L5.5 5.0 H8.5 V11.0 H5.5 Z" fill="#858585"/><path d="M18.5 8.0 L15.5 5.0 H12.5 V11.0 H15.5 Z" fill="#cc5cf5"/></svg>
<svg style="left:898px;top:752px" width="21" height="16" viewBox="0 0 21 16"><rect x="10.0" y="0" width="1" height="16" fill="#3a3a3a"/><path d="M2.5 8.0 L5.5 5.0 H8.5 V11.0 H5.5 Z" fill="#858585"/><path d="M18.5 8.0 L15.5 5.0 H12.5 V11.0 H15.5 Z" fill="#cc5cf5"/></svg>
<svg style="left:952px;top:649px" width="8" height="8" viewBox="0 0 8 8"><path d="M0.5 0.5 L7.5 7.5 M7.5 0.5 L0.5 7.5" stroke="#b0b0b0" stroke-width="1"/></svg>
<svg style="left:1422px;top:649px" width="8" height="8" viewBox="0 0 8 8"><path d="M0.5 0.5 L7.5 7.5 M7.5 0.5 L0.5 7.5" stroke="#b0b0b0" stroke-width="1"/></svg>
<svg style="left:1891px;top:649px" width="8" height="8" viewBox="0 0 8 8"><path d="M0.5 0.5 L7.5 7.5 M7.5 0.5 L0.5 7.5" stroke="#b0b0b0" stroke-width="1"/></svg>
<svg style="left:500px;top:983px" width="14" height="8" viewBox="0 0 14 8"><path d="M0.5 4 L4 0.3 H13.5 V7.7 H4 Z" fill="#d0d0d0"/><circle cx="5" cy="4" r="1.4" fill="#2a2a2a"/></svg>
<svg style="left:744px;top:978px" width="19" height="19" viewBox="0 0 19 19"><rect x="4.5" y="4.5" width="10" height="10" rx="1" fill="none" stroke="#d8d8d8" stroke-width="1"/><circle cx="9.5" cy="9.5" r="1.7" fill="#e0e0e0"/></svg>
<svg style="left:773px;top:981px" width="14" height="13" viewBox="0 0 14 13"><rect x="2" y="1" width="11" height="1.8" fill="#2fcc71"/><rect x="0" y="5.5" width="9" height="1.8" fill="#2fcc71"/><rect x="2" y="10" width="11" height="1.8" fill="#2fcc71"/></svg>
<svg style="left:860px;top:980px" width="14" height="14" viewBox="0 0 14 14"><path d="M2.5 1 V11.5 H13" fill="none" stroke="#c8c8c8" stroke-width="1"/><path d="M3 11 L12 4" stroke="#c8c8c8" stroke-width="1"/></svg>
<svg style="left:963px;top:979px" width="17" height="17" viewBox="0 0 17 17"><rect x="2" y="3" width="13" height="1.8" fill="#e0e0e0"/><rect x="2" y="7.5" width="9" height="1.8" fill="#e0e0e0"/><rect x="2" y="12" width="3" height="1.8" fill="#e0e0e0"/><rect x="7" y="12" width="3" height="1.8" fill="#e0e0e0"/><path d="M13.5 17 L17 17 L17 13.5 Z" fill="#6fcfb0"/></svg>
<svg style="left:1254px;top:980.5px" width="14" height="14" viewBox="0 0 14 14"><rect x="1" y="1" width="1.2" height="12" fill="#e0e0e0"/><rect x="4" y="3.5" width="5" height="1.5" fill="#e0e0e0"/><rect x="4" y="8.5" width="8" height="1.5" fill="#e0e0e0"/></svg>
<svg style="left:1271px;top:980.5px" width="14" height="14" viewBox="0 0 14 14"><rect x="6.4" y="1" width="1.2" height="12" fill="#e0e0e0"/><rect x="3.5" y="3.5" width="7" height="1.5" fill="#e0e0e0"/><rect x="1.5" y="8.5" width="11" height="1.5" fill="#e0e0e0"/></svg>
<svg style="left:1288px;top:980.5px" width="14" height="14" viewBox="0 0 14 14"><rect x="11.8" y="1" width="1.2" height="12" fill="#e0e0e0"/><rect x="5" y="3.5" width="5" height="1.5" fill="#e0e0e0"/><rect x="2" y="8.5" width="8" height="1.5" fill="#e0e0e0"/></svg>
<div style="left:1269px;top:979px;width:1px;height:17px;background:#444;"></div>
<div style="left:1286px;top:979px;width:1px;height:17px;background:#444;"></div>
<svg style="left:1310px;top:980px" width="15" height="15" viewBox="0 0 15 15"><rect x="3.5" y="3.5" width="8" height="8" fill="none" stroke="#d8d8d8" stroke-width="1"/><rect x="1.5" y="1.5" width="2" height="2" fill="#e0e0e0"/><rect x="1.5" y="11.5" width="2" height="2" fill="#e0e0e0"/><rect x="11.5" y="1.5" width="2" height="2" fill="#e0e0e0"/><rect x="11.5" y="11.5" width="2" height="2" fill="#e0e0e0"/><rect x="6.5" y="6.5" width="2" height="2" fill="#d8d8d8"/></svg>
<svg style="left:1331px;top:979px" width="16" height="16" viewBox="0 0 16 16"><path d="M3.5 12 L2.5 8 A5 5 0 0 1 12 5.5 L13.5 9" fill="none" stroke="#e0e0e0" stroke-width="2.6"/><path d="M2 11.5 L5.5 10.6 M11.5 9.5 L15 8.6" stroke="#2a2a2a" stroke-width="0.9"/></svg>
<svg style="left:1349px;top:983.5px" width="8" height="8" viewBox="0 0 8 8"><path d="M1.5 1 L6.5 4 L1.5 7 Z" fill="none" stroke="#9a9a9a" stroke-width="1"/></svg>
<div style="left:1346px;top:979px;width:1px;height:17px;background:#444;"></div>
<svg style="left:1366px;top:980px" width="16" height="15" viewBox="0 0 16 15"><path d="M8 1 V14 M5 4 V11 M11 4 V11 M1 7.5 H4 M12 7.5 H15" stroke="#d8d8d8" stroke-width="1"/></svg>
<svg style="left:1384px;top:983.5px" width="8" height="8" viewBox="0 0 8 8"><path d="M1.5 1 L6.5 4 L1.5 7 Z" fill="none" stroke="#9a9a9a" stroke-width="1"/></svg>
<div style="left:1381px;top:979px;width:1px;height:17px;background:#444;"></div>
<svg style="left:1742px;top:980px" width="16" height="16" viewBox="0 0 16 16"><circle cx="6.5" cy="6.5" r="5" fill="none" stroke="#e0e0e0" stroke-width="1"/><path d="M4 6.5 H9 M10.2 10.2 L14 14" stroke="#e0e0e0" stroke-width="1.2"/></svg>
<svg style="left:1887px;top:980px" width="16" height="16" viewBox="0 0 16 16"><circle cx="6.5" cy="6.5" r="5" fill="none" stroke="#e0e0e0" stroke-width="1"/><path d="M4 6.5 H9 M6.5 4 V9 M10.2 10.2 L14 14" stroke="#e0e0e0" stroke-width="1.2"/></svg>
<svg style="left:508px;top:1007px" width="17" height="17" viewBox="0 0 17 17"><path d="M3 3 H14 V11.5 H9.5 L7 14 V11.5 H3 Z" fill="#e6e6e6"/><path d="M5 5.3 H12 M5 7.3 H12 M5 9.3 H12" stroke="#2a2a2a" stroke-width="0.9"/><path d="M13.5 17 L17 17 L17 13.5 Z" fill="#6fcfb0"/></svg>
<svg style="left:1547px;top:1008px" width="14" height="15" viewBox="0 0 14 15"><path d="M2 1.5 H9 L12 4.5 V13.5 H2 Z" fill="#f4f4f4" stroke="#bbb" stroke-width="0.6"/><path d="M5 11 L11 4.5 L12.5 6 L6.5 12.2 L4.6 12.6 Z" fill="#e8763a"/></svg>
<svg style="left:1657px;top:1009px" width="16" height="13" viewBox="0 0 16 13"><path d="M1.5 5 Q1 2 3 2 Q4.5 1 5.5 2.5 L7 7.5 Q7 12 4 12 Q1.5 11 1.5 7 Z" fill="#f2c11b"/><path d="M14.5 5 Q15 2 13 2 Q11.5 1 10.5 2.5 L9 7.5 Q9 12 12 12 Q14.500 11 14.5 7 Z" fill="#f2c11b"/></svg>
<svg style="left:1781px;top:1008px" width="15" height="15" viewBox="0 0 15 15"><circle cx="7.5" cy="8.5" r="5.8" fill="#f2c11b"/><path d="M2.5 5.5 L7 0.8 L9.5 5.2 Z" fill="#d94a7a"/><path d="M4.8 10 Q7.500 13 10.2 10 Z" fill="#7a4a1a"/><circle cx="5.500" cy="7.8" r="0.8" fill="#5a3a10"/><circle cx="9.5" cy="7.8" r="0.8" fill="#5a3a10"/></svg>
<svg style="left:1890px;top:1008px" width="15" height="15" viewBox="0 0 15 15"><path d="M13.5 1.500 C9.500 1.5 6.5 4 5 8 L7.500 10.500 C11.500 9 13.500 5.500 13.5 1.5 Z" fill="#e8e8f0" stroke="#9aa" stroke-width="0.5"/><circle cx="10" cy="5" r="1.3" fill="#4aa3df"/><path d="M5 8 L2.5 8.500 L4.500 6 Z M7.500 10.5 L7 13 L9.500 11 Z" fill="#d9443a"/><path d="M3.5 10 L1.5 13.5 L5 11.500 Z" fill="#f2a11b"/></svg>
<svg style="left:1605px;top:434px" width="13" height="13" viewBox="0 0 13 13"><rect x="0.5" y="1.5" width="1.6" height="10" fill="#2fcc71"/><rect x="3.7" y="1.5" width="1.6" height="10" fill="#2fcc71"/><path d="M7.2 2 L8.8 1.6 L11.8 11 L10.2 11.500 Z" fill="#2fcc71"/></svg>
<svg style="left:1670px;top:434px" width="13" height="13" viewBox="0 0 13 13"><path d="M1 3.500 V2 H5 L6 3.500" fill="none" stroke="#d0d0d0"/><rect x="1" y="3.5" width="11" height="8" fill="#d0d0d0"/><rect x="2.5" y="5.5" width="1.500" height="1.2" fill="#555"/><rect x="5" y="5.5" width="5.500" height="1.2" fill="#555"/><rect x="2.5" y="8" width="1.500" height="1.2" fill="#555"/><rect x="5" y="8" width="5.500" height="1.2" fill="#555"/></svg>
<svg style="left:1737px;top:434px" width="12" height="13" viewBox="0 0 12 13"><path d="M2 1.5 H7 L10 4.5 V11.5 H2 Z M7 1.5 V4.500 H10" fill="none" stroke="#d8d8d8" stroke-width="1"/></svg>
<svg style="left:1801px;top:434px" width="13" height="13" viewBox="0 0 13 13"><path d="M3.500 1.5 H9.5 A2 2 0 0 1 11.500 3.500 V7 L7 11.500 H3.500 A2 2 0 0 1 1.5 9.500 V3.500 A2 2 0 0 1 3.5 1.500 Z M11.5 7 H8.500 A1.5 1.5 0 0 0 7 8.500 V11.5" fill="none" stroke="#d8d8d8" stroke-width="1"/></svg>
<svg style="left:1861px;top:435px" width="12" height="12" viewBox="0 0 12 12"><rect x="1" y="1" width="4" height="4" fill="#2fcc71"/><rect x="1" y="7" width="4" height="4" fill="#2fcc71"/><rect x="7" y="1" width="4" height="4" fill="#2fcc71"/><rect x="7" y="7" width="4" height="4" fill="#2fcc71"/></svg>
<svg style="left:1880px;top:435px" width="12" height="12" viewBox="0 0 12 12"><rect x="0.500" y="1.5" width="11" height="1.2" fill="#e0e0e0"/><rect x="0.500" y="5.4" width="11" height="1.2" fill="#e0e0e0"/><rect x="0.500" y="9.3" width="11" height="1.2" fill="#e0e0e0"/></svg>
<svg style="left:1793px;top:558px" width="14" height="14" viewBox="0 0 14 14"><rect x="1" y="1" width="1.2" height="12" fill="#e0e0e0"/><rect x="4" y="3.5" width="5" height="1.5" fill="#e0e0e0"/><rect x="4" y="8.5" width="8" height="1.5" fill="#e0e0e0"/></svg>
<svg style="left:1811px;top:558px" width="14" height="14" viewBox="0 0 14 14"><rect x="6.4" y="1" width="1.2" height="12" fill="#e0e0e0"/><rect x="3.5" y="3.5" width="7" height="1.5" fill="#e0e0e0"/><rect x="1.5" y="8.5" width="11" height="1.5" fill="#e0e0e0"/></svg>
<svg style="left:1829px;top:558px" width="14" height="14" viewBox="0 0 14 14"><rect x="11.8" y="1" width="1.2" height="12" fill="#e0e0e0"/><rect x="5" y="3.5" width="5" height="1.5" fill="#e0e0e0"/><rect x="2" y="8.5" width="8" height="1.5" fill="#e0e0e0"/></svg>
<svg style="left:1855px;top:558px" width="14" height="14" viewBox="0 0 14 14"><rect x="1" y="1" width="12" height="1.2" fill="#e0e0e0"/><rect x="3.5" y="4" width="1.5" height="8" fill="#e0e0e0"/><rect x="8.5" y="4" width="1.5" height="5" fill="#e0e0e0"/></svg>
<svg style="left:1873px;top:558px" width="14" height="14" viewBox="0 0 14 14"><rect x="1" y="6.4" width="12" height="1.2" fill="#e0e0e0"/><rect x="3.5" y="1.5" width="1.5" height="11" fill="#e0e0e0"/><rect x="8.5" y="3.5" width="1.5" height="7" fill="#e0e0e0"/></svg>
<svg style="left:1891px;top:558px" width="14" height="14" viewBox="0 0 14 14"><rect x="1" y="11.8" width="12" height="1.2" fill="#e0e0e0"/><rect x="3.5" y="4" width="1.5" height="6" fill="#e0e0e0"/><rect x="8.5" y="1.5" width="1.5" height="8.5" fill="#e0e0e0"/></svg>
<svg style="left:1793px;top:586px" width="14" height="14" viewBox="0 0 14 14"><rect x="1.5" y="1" width="1.2" height="12" fill="#e0e0e0"/><rect x="5.5" y="3" width="3" height="8" fill="#e0e0e0"/><rect x="11.3" y="1" width="1.2" height="12" fill="#e0e0e0"/></svg>
<svg style="left:1811px;top:586px" width="14" height="14" viewBox="0 0 14 14"><rect x="1" y="1.5" width="12" height="1.2" fill="#e0e0e0"/><rect x="3" y="5.5" width="8" height="3" fill="#e0e0e0"/><rect x="1" y="11.3" width="12" height="1.2" fill="#e0e0e0"/></svg>
<svg style="left:1829px;top:586px" width="14" height="14" viewBox="0 0 14 14"><rect x="1" y="9" width="3" height="3" fill="#e0e0e0"/><rect x="5.5" y="5.5" width="3" height="3" fill="#e0e0e0"/><rect x="10" y="2" width="3" height="3" fill="#e0e0e0"/><path d="M1 1 H3 M1 1 V3 M13 13 H11 M13 13 V11" stroke="#e0e0e0" stroke-width="1" fill="none"/></svg>
<div style="left:1808px;top:557px;width:1px;height:15px;background:#4a4a4a;"></div>
<div style="left:1826px;top:557px;width:1px;height:15px;background:#4a4a4a;"></div>
<div style="left:1870px;top:557px;width:1px;height:15px;background:#4a4a4a;"></div>
<div style="left:1888px;top:557px;width:1px;height:15px;background:#4a4a4a;"></div>
<div style="left:1808px;top:585px;width:1px;height:15px;background:#4a4a4a;"></div>
<div style="left:1826px;top:585px;width:1px;height:15px;background:#4a4a4a;"></div>
<svg style="left:867px;top:593px" width="20" height="19" viewBox="0 0 20 19"><rect x="3" y="4" width="2" height="10.500" fill="#cdcdcd"/><path d="M14.500 4 V14.500 L6.500 9.250 Z" fill="#cdcdcd"/></svg>
<svg style="left:887px;top:593px" width="20" height="19" viewBox="0 0 20 19"><path d="M10.500 4 V14.500 L2.500 9.250 Z" fill="#cdcdcd"/><rect x="12.500" y="4" width="2" height="10.500" fill="#cdcdcd"/></svg>
<svg style="left:906px;top:593px" width="20" height="19" viewBox="0 0 20 19"><path d="M5.500 4 V14.500 L14 9.250 Z" fill="#cdcdcd"/></svg>
<svg style="left:926px;top:593px" width="20" height="19" viewBox="0 0 20 19"><rect x="3.500" y="4" width="2" height="10.500" fill="#cdcdcd"/><path d="M7.500 4 V14.500 L15.500 9.250 Z" fill="#cdcdcd"/></svg>
<svg style="left:946px;top:593px" width="20" height="19" viewBox="0 0 20 19"><path d="M4 4 V14.500 L12 9.250 Z" fill="#cdcdcd"/><rect x="13.500" y="4" width="2" height="10.500" fill="#cdcdcd"/></svg>
<svg style="left:972px;top:593px" width="19" height="19" viewBox="0 0 19 19"><path d="M9 5.500 H4.500 A1.5 1.5 0 0 0 3 7 V12 A1.5 1.5 0 0 0 4.500 13.500 H14 A1.5 1.5 0 0 0 15.500 12 V8.500" fill="none" stroke="#cdcdcd" stroke-width="1.3"/><path d="M10 2 L15 5 L10 8.500 Z" fill="#cdcdcd"/></svg>
<svg style="left:1234px;top:598px" width="14" height="8" viewBox="0 0 14 8"><path d="M0.5 4 L4 0.3 H13.5 V7.7 H4 Z" fill="#d0d0d0"/><circle cx="5" cy="4" r="1.4" fill="#2e2e2e"/></svg>
<svg style="left:1275px;top:595px" width="16" height="14" viewBox="0 0 16 14"><path d="M0.500 5 H3.500 L7.500 1.500 V12.500 L3.500 9 H0.500 Z" fill="#2fcc71"/><path d="M9.500 4.200 A3.800 3.800 0 0 1 9.500 9.800 M11.500 2 A6.500 6.500 0 0 1 11.500 12" fill="none" stroke="#2fcc71" stroke-width="1.200"/></svg>
<div style="left:1291px;top:593px;width:1px;height:18px;background:#444;"></div>
<svg style="left:1294px;top:598px" width="8" height="8" viewBox="0 0 8 8"><path d="M1.5 1 L6.5 4 L1.5 7 Z" fill="none" stroke="#9a9a9a" stroke-width="1"/></svg>
<svg style="left:1309px;top:594px" width="16" height="16" viewBox="0 0 16 16"><path d="M3.5 12 L2.5 8 A5 5 0 0 1 12 5.5 L13.5 9" fill="none" stroke="#e0e0e0" stroke-width="2.6"/><path d="M2 11.5 L5.5 10.6 M11.5 9.5 L15 8.6" stroke="#2a2a2a" stroke-width="0.9"/></svg>
<div style="left:1326px;top:593px;width:1px;height:18px;background:#444;"></div>
<svg style="left:1329px;top:598px" width="8" height="8" viewBox="0 0 8 8"><path d="M1.5 1 L6.5 4 L1.5 7 Z" fill="none" stroke="#9a9a9a" stroke-width="1"/></svg>
<svg style="left:1344px;top:594px" width="16" height="16" viewBox="0 0 16 16"><path d="M5.500 1 V15 M10.500 1 V15 M1 5.500 H15 M1 10.500 H15" stroke="#e0e0e0" stroke-width="1.100"/></svg>
<div style="left:1361px;top:593px;width:1px;height:18px;background:#444;"></div>
<svg style="left:1364px;top:598px" width="8" height="8" viewBox="0 0 8 8"><path d="M1.5 1 L6.5 4 L1.5 7 Z" fill="none" stroke="#9a9a9a" stroke-width="1"/></svg>
<svg style="left:1379px;top:595px" width="16" height="14" viewBox="0 0 16 14"><rect x="0.500" y="1" width="4" height="4" fill="#2fcc71"/><rect x="6" y="1" width="9.500" height="4" fill="#2fcc71"/><path d="M0.500 7 H15.500 V13 H0.500 Z" fill="none" stroke="#2fcc71" stroke-width="1.200"/><rect x="0.500" y="7" width="4" height="6" fill="#2fcc71"/></svg>
<svg style="left:1402px;top:596px" width="16" height="12" viewBox="0 0 16 12"><path d="M0.800 1 L4.500 6 L0.800 11 M5.800 1 L9.500 6 L5.800 11 M10.800 1 L14.500 6 L10.800 11" fill="none" stroke="#cdcdcd" stroke-width="1.600"/></svg>
<svg style="left:1425px;top:595px" width="16" height="14" viewBox="0 0 16 14"><rect x="1" y="1" width="14" height="11" fill="none" stroke="#cdcdcd" stroke-width="1.100"/><rect x="1" y="10.500" width="14" height="2.500" fill="#cdcdcd"/></svg>
<div style="left:1442px;top:593px;width:1px;height:18px;background:#444;"></div>
<svg style="left:1445px;top:598px" width="8" height="8" viewBox="0 0 8 8"><path d="M1.5 1 L6.5 4 L1.5 7 Z" fill="none" stroke="#9a9a9a" stroke-width="1"/></svg>
<svg style="left:1460px;top:595px" width="16" height="14" viewBox="0 0 16 14"><rect x="0.500" y="0.500" width="8.500" height="6" fill="none" stroke="#cdcdcd" stroke-width="1"/><path d="M4 8.500 V9.500 H12 V4 H11 M7.500 11.500 V12.500 H15 V7 H14" fill="none" stroke="#8a8a8a" stroke-width="1"/></svg>
<div style="left:1477px;top:593px;width:1px;height:18px;background:#444;"></div>
<svg style="left:1480px;top:598px" width="8" height="8" viewBox="0 0 8 8"><path d="M1.5 1 L6.5 4 L1.5 7 Z" fill="none" stroke="#9a9a9a" stroke-width="1"/></svg>
<svg style="left:1495px;top:594px" width="16" height="16" viewBox="0 0 16 16"><rect x="1" y="1" width="9" height="9" fill="#cdcdcd"/><rect x="6.500" y="6.500" width="8.500" height="8.500" fill="#2a2a2a" stroke="#cdcdcd" stroke-width="1.100"/></svg>
<div style="left:1512px;top:593px;width:1px;height:18px;background:#444;"></div>
<svg style="left:1515px;top:598px" width="8" height="8" viewBox="0 0 8 8"><path d="M1.5 1 L6.5 4 L1.5 7 Z" fill="none" stroke="#9a9a9a" stroke-width="1"/></svg>
<svg style="left:1531px;top:595px" width="14" height="14" viewBox="0 0 14 14"><rect x="1" y="1" width="3" height="3" fill="#2fcc71"/><rect x="1" y="7" width="3" height="3" fill="#2fcc71"/><rect x="4" y="4" width="3" height="3" fill="#2fcc71"/><rect x="4" y="10" width="3" height="3" fill="#2fcc71"/><rect x="7" y="1" width="3" height="3" fill="#2fcc71"/><rect x="7" y="7" width="3" height="3" fill="#2fcc71"/><rect x="10" y="4" width="3" height="3" fill="#2fcc71"/><rect x="10" y="10" width="3" height="3" fill="#2fcc71"/></svg>
<div style="left:1547px;top:593px;width:1px;height:18px;background:#444;"></div>
<svg style="left:1550px;top:598px" width="8" height="8" viewBox="0 0 8 8"><path d="M1.5 1 L6.5 4 L1.5 7 Z" fill="none" stroke="#9a9a9a" stroke-width="1"/></svg>
<svg style="left:1565px;top:594px" width="16" height="16" viewBox="0 0 16 16"><path d="M15.14 6.48 L15.14 9.52 L13.13 9.33 L12.57 10.69 L14.12 11.98 L11.98 14.12 L10.69 12.57 L9.33 13.13 L9.52 15.14 L6.48 15.14 L6.67 13.13 L5.31 12.57 L4.02 14.12 L1.88 11.98 L3.43 10.69 L2.87 9.33 L0.86 9.52 L0.86 6.48 L2.87 6.67 L3.43 5.31 L1.88 4.02 L4.02 1.88 L5.31 3.43 L6.67 2.87 L6.48 0.86 L9.52 0.86 L9.33 2.87 L10.69 3.43 L11.98 1.88 L14.12 4.02 L12.57 5.31 L13.13 6.67 Z M10.7 8 A2.7 2.7 0 1 0 5.3 8 A2.7 2.7 0 1 0 10.7 8 Z" fill="#e6e6e6" fill-rule="evenodd"/></svg>
</body></html>
